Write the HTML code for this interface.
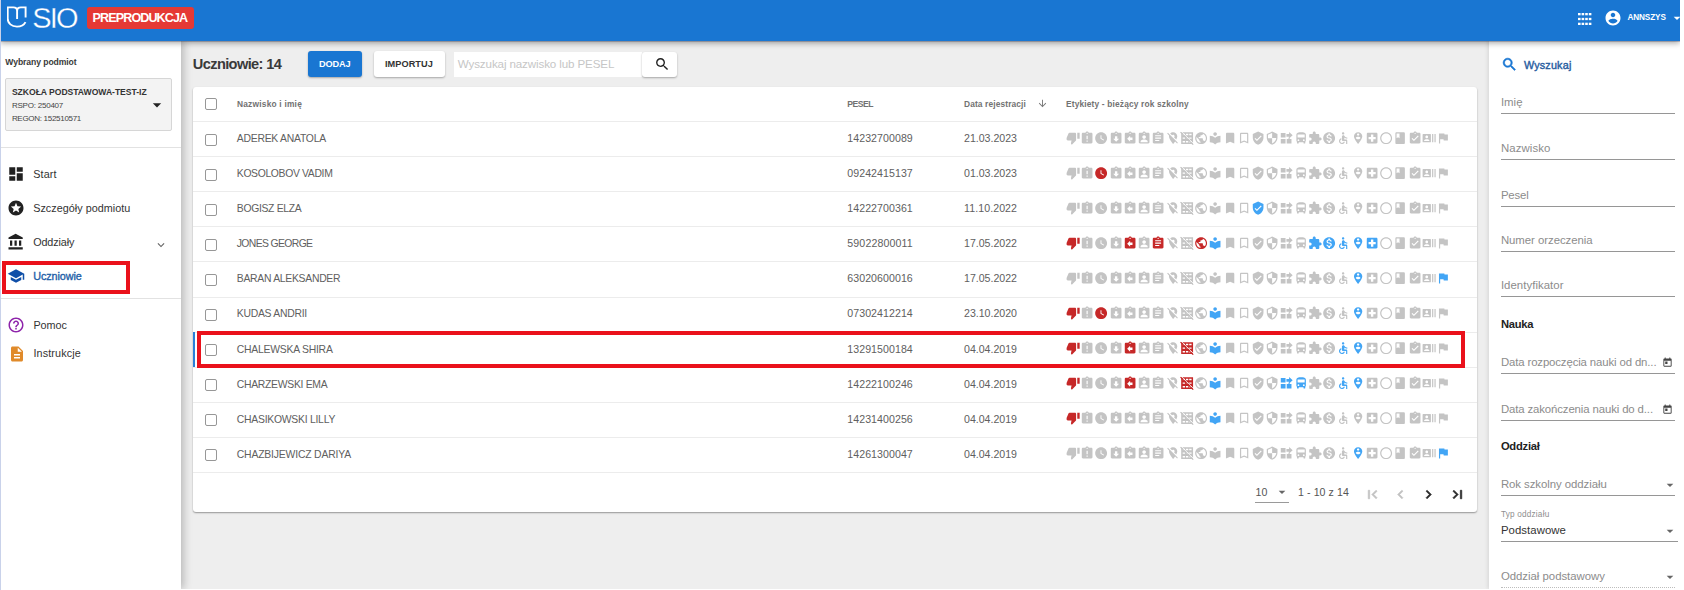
<!DOCTYPE html>
<html lang="pl"><head><meta charset="utf-8"><title>SIO - Uczniowie</title>
<style>
html,body{margin:0;padding:0;background:#fff;}
body{width:1684px;height:590px;position:relative;overflow:hidden;font-family:"Liberation Sans",sans-serif;}
.b{position:absolute;display:block;}
.t{position:absolute;display:block;white-space:nowrap;}
</style></head><body>
<div class="b" style="left:181.00px;top:40.00px;width:1308.00px;height:549.00px;background:#eeeeee;"></div>
<div class="b" style="left:193.00px;top:86.50px;width:1284.00px;height:425.00px;background:#fff;border-radius:3px;box-shadow:0 1px 2px rgba(0,0,0,.28),0 1px 1px rgba(0,0,0,.12);"></div>
<div class="b" style="left:0.00px;top:40.00px;width:181.00px;height:549.00px;background:#fff;box-shadow:3px 0 8px rgba(0,0,0,.22);"></div>
<div class="b" style="left:1489.00px;top:40.00px;width:191.00px;height:549.00px;background:#fff;box-shadow:-1px 0 4px rgba(0,0,0,.11);"></div>
<div class="b" style="left:0.00px;top:0.00px;width:1680.00px;height:40.50px;background:#1976d2;box-shadow:0 1px 0 rgba(0,0,40,.2),0 2px 6px rgba(0,0,0,.36);"></div>
<div class="b" style="left:1680.00px;top:0.00px;width:4.00px;height:590.00px;background:#fff;"></div>
<div class="b" style="left:0.00px;top:589.00px;width:1684.00px;height:1.00px;background:#fff;"></div>
<div class="b" style="left:0.00px;top:0.00px;width:1.00px;height:590.00px;background:#c9d2ea;"></div>
<svg class="b" style="left:7px;top:6px" width="20" height="22" viewBox="0 0 20 22"><path fill="none" stroke="#fff" stroke-width="1.9" stroke-linejoin="round" stroke-linecap="butt" d="M0.700 1.400H6.400C8.600 1.400 10.100 2.600 10.100 4.900V12.900M18.600 1.400H13.800C11.600 1.400 10.100 2.600 10.100 4.900M18.600 0.450V11.600M0.700 0.450V12.400C0.700 17.400 4.600 20.600 10 20.600 13.700 20.600 17 19 18.500 16.100"/></svg>
<span class="t" style="left:32.30px;top:2px;line-height:32px;font-size:29px;color:#fff;letter-spacing:-1.879px;-webkit-text-stroke:0.35px #1976d2;">SIO</span>
<div class="b" style="left:86.50px;top:6.50px;width:107.30px;height:22.00px;background:#e53935;border-radius:3px;"></div>
<span class="t" style="left:92.60px;top:11px;line-height:14px;font-size:12.6px;font-weight:bold;color:#fff;letter-spacing:-0.920px;">PREPRODUKCJA</span>
<svg class="b" style="left:1578.3px;top:12.7px" width="13.4" height="12" viewBox="0 0 13.4 12"><rect x="0.0" y="0.00" width="2.6" height="2.3" fill="#fff"/><rect x="3.6" y="0.00" width="2.6" height="2.3" fill="#fff"/><rect x="7.2" y="0.00" width="2.6" height="2.3" fill="#fff"/><rect x="10.8" y="0.00" width="2.6" height="2.3" fill="#fff"/><rect x="0.0" y="4.85" width="2.6" height="2.3" fill="#fff"/><rect x="3.6" y="4.85" width="2.6" height="2.3" fill="#fff"/><rect x="7.2" y="4.85" width="2.6" height="2.3" fill="#fff"/><rect x="10.8" y="4.85" width="2.6" height="2.3" fill="#fff"/><rect x="0.0" y="9.70" width="2.6" height="2.3" fill="#fff"/><rect x="3.6" y="9.70" width="2.6" height="2.3" fill="#fff"/><rect x="7.2" y="9.70" width="2.6" height="2.3" fill="#fff"/><rect x="10.8" y="9.70" width="2.6" height="2.3" fill="#fff"/></svg>
<svg class="b" style="left:1604.30px;top:8.70px;" width="18" height="18" viewBox="0 0 24 24"><path fill="#fff" d="M12 2C6.480 2 2 6.480 2 12s4.480 10 10 10 10-4.480 10-10S17.520 2 12 2zm0 3c1.660 0 3 1.340 3 3s-1.340 3-3 3-3-1.340-3-3 1.340-3 3-3zm0 14.200c-2.500 0-4.710-1.280-6-3.220.03-1.990 4-3.080 6-3.080 1.990 0 5.970 1.090 6 3.080-1.290 1.940-3.500 3.220-6 3.220z"/></svg>
<span class="t" style="left:1627.50px;top:13px;line-height:9px;font-size:8.2px;font-weight:bold;color:#fff;letter-spacing:-0.131px;">ANNSZYS</span>
<svg class="b" style="left:1668.50px;top:9.50px;" width="16" height="16" viewBox="0 0 24 24"><path fill="#fff" d="M7 10l5 5 5-5z"/></svg>
<span class="t" style="left:5.30px;top:57px;line-height:10px;font-size:8.6px;font-weight:bold;color:#3a3a3a;letter-spacing:-0.076px;">Wybrany podmiot</span>
<div class="b" style="left:5.30px;top:78.20px;width:166.30px;height:53.00px;background:#f3f3f3;border:1px solid #d6d6d6;box-sizing:border-box;border-radius:2px;"></div>
<span class="t" style="left:11.90px;top:87px;line-height:10px;font-size:8.6px;font-weight:bold;color:#333;letter-spacing:-0.033px;">SZKOŁA PODSTAWOWA-TEST-IZ</span>
<span class="t" style="left:11.90px;top:101px;line-height:9px;font-size:8.0px;color:#444;letter-spacing:-0.219px;">RSPO: 250407</span>
<span class="t" style="left:11.90px;top:114px;line-height:9px;font-size:8.0px;color:#444;letter-spacing:-0.295px;">REGON: 152510571</span>
<svg class="b" style="left:147.00px;top:95.30px;" width="20" height="20" viewBox="0 0 24 24"><path fill="#222" d="M7 10l5 5 5-5z"/></svg>
<div class="b" style="left:1.00px;top:147.00px;width:180.00px;height:1.00px;background:#e2e2e2;"></div>
<div class="b" style="left:1.00px;top:298.00px;width:180.00px;height:1.00px;background:#e2e2e2;"></div>
<svg class="b" style="left:7.30px;top:165.20px;" width="18" height="18" viewBox="0 0 24 24"><path fill="#212121" d="M3 13h8V3H3v10zm0 8h8v-6H3v6zm10 0h8V11h-8v10zm0-18v6h8V3h-8z"/></svg>
<span class="t" style="left:33.20px;top:168px;line-height:12px;font-size:10.8px;color:#333;letter-spacing:0.123px;">Start</span>
<svg class="b" style="left:7.30px;top:199.20px;" width="18" height="18" viewBox="0 0 24 24"><path fill="#212121" d="M11.990 2C6.470 2 2 6.480 2 12s4.470 10 9.990 10C17.520 22 22 17.520 22 12S17.520 2 11.990 2zm4.240 16L12 15.450 7.770 18l1.120-4.810-3.730-3.230 4.920-.420L12 5l1.920 4.530 4.920.420-3.730 3.230L16.230 18z"/></svg>
<span class="t" style="left:33.20px;top:202px;line-height:12px;font-size:10.8px;color:#333;letter-spacing:0.026px;">Szczegóły podmiotu</span>
<svg class="b" style="left:7.30px;top:233.20px;" width="18" height="18" viewBox="0 0 24 24"><path fill="#212121" d="M4 10v7h3v-7H4zm6 0v7h3v-7h-3zM2 22h19v-3H2v3zm14-12v7h3v-7h-3zm-4.500-9L2 6v2h19V6l-9.500-5z"/></svg>
<span class="t" style="left:33.20px;top:236px;line-height:12px;font-size:10.8px;color:#333;letter-spacing:-0.117px;">Oddziały</span>
<svg class="b" style="left:7.30px;top:267.40px;" width="18" height="18" viewBox="0 0 24 24"><path fill="#0f4fa8" d="M5 13.180v4L12 21l7-3.820v-4L12 17l-7-3.820zM12 3L1 9l11 6 9-4.910V17h2V9L12 3z"/></svg>
<span class="t" style="left:33.20px;top:270px;line-height:12px;font-size:10.8px;color:#1f5fa8;letter-spacing:-0.065px;-webkit-text-stroke:0.35px #1f5fa8;">Uczniowie</span>
<svg class="b" style="left:154.00px;top:237.50px;" width="14" height="14" viewBox="0 0 24 24"><path fill="#666" d="M16.590 8.590L12 13.170 7.410 8.590 6 10l6 6 6-6z"/></svg>
<svg class="b" style="left:7.20px;top:316.30px;" width="18" height="18" viewBox="0 0 24 24"><path fill="#8e24aa" d="M11 18h2v-2h-2v2zm1-16C6.480 2 2 6.480 2 12s4.480 10 10 10 10-4.480 10-10S17.520 2 12 2zm0 18c-4.410 0-8-3.590-8-8s3.590-8 8-8 8 3.590 8 8-3.590 8-8 8zm0-14c-2.210 0-4 1.790-4 4h2c0-1.100.9-2 2-2s2 .9 2 2c0 2-3 1.750-3 5h2c0-2.250 3-2.500 3-5 0-2.210-1.790-4-4-4z"/></svg>
<span class="t" style="left:33.40px;top:319px;line-height:12px;font-size:10.8px;color:#333;letter-spacing:-0.029px;">Pomoc</span>
<svg class="b" style="left:7.50px;top:344.90px;" width="18" height="18" viewBox="0 0 24 24"><path fill="#e08a2a" d="M14 2H6c-1.100 0-1.990.9-1.990 2L4 20c0 1.100.890 2 1.990 2H18c1.100 0 2-.9 2-2V8l-6-6zm2 16H8v-2h8v2zm0-4H8v-2h8v2zm-3-5V3.500L18.500 9H13z"/></svg>
<span class="t" style="left:33.40px;top:347px;line-height:12px;font-size:10.8px;color:#333;letter-spacing:0.131px;">Instrukcje</span>
<div class="b" style="left:2.30px;top:260.70px;width:127.80px;height:33.40px;border:4px solid #ea111b;box-sizing:border-box;"></div>
<span class="t" style="left:192.80px;top:56px;line-height:16px;font-size:14.6px;font-weight:bold;color:#3a3a3a;letter-spacing:-0.621px;">Uczniowie: 14</span>
<div class="b" style="left:308.00px;top:51.00px;width:54.00px;height:26.00px;background:#1976d2;border-radius:3px;box-shadow:0 1px 2px rgba(0,0,0,.3);"></div>
<span class="t" style="left:319.00px;top:59px;line-height:10px;font-size:9.2px;font-weight:bold;color:#fff;letter-spacing:-0.126px;">DODAJ</span>
<div class="b" style="left:373.70px;top:51.00px;width:71.00px;height:26.00px;background:#fff;border-radius:3px;box-shadow:0 1px 2px rgba(0,0,0,.3);"></div>
<span class="t" style="left:384.90px;top:59px;line-height:10px;font-size:9.2px;font-weight:bold;color:#333;letter-spacing:0.066px;">IMPORTUJ</span>
<div class="b" style="left:454.20px;top:51.60px;width:188.00px;height:25.40px;background:#fff;"></div>
<span class="t" style="left:457.80px;top:57px;line-height:13px;font-size:11.6px;color:#c6c6c6;letter-spacing:-0.119px;">Wyszukaj nazwisko lub PESEL</span>
<div class="b" style="left:642.30px;top:51.60px;width:34.70px;height:25.40px;background:#fff;border-radius:3px;box-shadow:0 1px 2px rgba(0,0,0,.3);"></div>
<svg class="b" style="left:653.80px;top:56.00px;" width="16.5" height="16.5" viewBox="0 0 24 24"><path fill="#222" d="M15.500 14h-.79l-.28-.27C15.410 12.590 16 11.110 16 9.500 16 5.910 13.090 3 9.500 3S3 5.910 3 9.500 5.910 16 9.500 16c1.610 0 3.090-.59 4.230-1.570l.27.28v.79l5 4.990L20.490 19l-4.990-5zm-6 0C7.010 14 5 11.990 5 9.500S7.010 5 9.500 5 14 7.010 14 9.500 11.990 14 9.500 14z"/></svg>
<div class="b" style="left:205.20px;top:98.20px;width:12.00px;height:12.00px;border:1px solid #979797;border-radius:2px;box-sizing:border-box;background:#fff;"></div>
<span class="t" style="left:237.00px;top:99px;line-height:10px;font-size:8.4px;font-weight:bold;color:#727272;letter-spacing:0.208px;">Nazwisko i imię</span>
<span class="t" style="left:847.30px;top:99px;line-height:10px;font-size:8.6px;font-weight:bold;color:#727272;letter-spacing:-0.475px;">PESEL</span>
<span class="t" style="left:964.00px;top:99px;line-height:10px;font-size:8.4px;font-weight:bold;color:#727272;letter-spacing:0.118px;">Data rejestracji</span>
<svg class="b" style="left:1037.40px;top:97.80px;" width="11" height="11" viewBox="0 0 24 24"><path fill="#777" d="M20 12l-1.410-1.410L13 16.170V4h-2v12.170l-5.580-5.590L4 12l8 8 8-8z"/></svg>
<span class="t" style="left:1066.00px;top:99px;line-height:10px;font-size:8.4px;font-weight:bold;color:#727272;letter-spacing:0.152px;">Etykiety - bieżący rok szkolny</span>
<div class="b" style="left:193.00px;top:121.00px;width:1284.00px;height:1.00px;background:#ececec;"></div>
<div class="b" style="left:205.20px;top:133.70px;width:12.00px;height:12.00px;border:1px solid #979797;border-radius:2px;box-sizing:border-box;background:#fff;"></div>
<span class="t" style="left:236.80px;top:133px;line-height:11px;font-size:10.4px;color:#606060;letter-spacing:-0.252px;">ADEREK ANATOLA</span>
<span class="t" style="left:847.30px;top:132px;line-height:12px;font-size:10.6px;color:#606060;letter-spacing:0.065px;">14232700089</span>
<span class="t" style="left:964.00px;top:132px;line-height:12px;font-size:10.6px;color:#606060;letter-spacing:-0.006px;">21.03.2023</span>
<svg class="b" style="left:1066.00px;top:131.10px;color:#c4c4c4" width="14.25" height="14.25" viewBox="0 0 24 24"><path fill="currentColor" d="M15 3H6c-.83 0-1.54.5-1.84 1.22l-3.02 7.05c-.09.23-.14.47-.14.73v2c0 1.1.9 2 2 2h6.31l-.95 4.57-.03.32c0 .41.17.79.44 1.06L9.83 23l6.59-6.59c.36-.36.58-.86.58-1.41V5c0-1.1-.9-2-2-2zm4 0v10h4V3h-4z"/></svg>
<svg class="b" style="left:1080.23px;top:131.10px;color:#c4c4c4" width="14.25" height="14.25" viewBox="0 0 24 24"><path fill="currentColor" d="M19 3h-4.18C14.4 1.84 13.3 1 12 1c-1.3 0-2.4.84-2.82 2H5c-1.1 0-2 .9-2 2v14c0 1.1.9 2 2 2h14c1.1 0 2-.9 2-2V5c0-1.1-.9-2-2-2zm-6 15h-2v-2h2v2zm0-4h-2V8h2v6zm-1-9c-.55 0-1-.45-1-1s.45-1 1-1 1 .45 1 1-.45 1-1 1z"/></svg>
<svg class="b" style="left:1094.46px;top:131.10px;color:#c4c4c4" width="14.25" height="14.25" viewBox="0 0 24 24"><path fill="currentColor" d="M12 2C6.5 2 2 6.5 2 12s4.5 10 10 10 10-4.5 10-10S17.5 2 12 2zm4.2 14.2L11 13V7h1.5v5.2l4.5 2.7-.8 1.3z"/></svg>
<svg class="b" style="left:1108.69px;top:131.10px;color:#c4c4c4" width="14.25" height="14.25" viewBox="0 0 24 24"><path fill="currentColor" d="M19 3h-4.18C14.4 1.84 13.3 1 12 1c-1.3 0-2.4.84-2.82 2H5c-1.1 0-2 .9-2 2v14c0 1.1.9 2 2 2h14c1.1 0 2-.9 2-2V5c0-1.1-.9-2-2-2zm-7 0c.55 0 1 .45 1 1s-.45 1-1 1-1-.45-1-1 .45-1 1-1zm0 15l-5-5h3V9h4v4h3l-5 5z"/></svg>
<svg class="b" style="left:1122.92px;top:131.10px;color:#c4c4c4" width="14.25" height="14.25" viewBox="0 0 24 24"><path fill="currentColor" d="M19 3h-4.18C14.4 1.84 13.3 1 12 1c-1.3 0-2.4.84-2.82 2H5c-1.1 0-2 .9-2 2v14c0 1.1.9 2 2 2h14c1.1 0 2-.9 2-2V5c0-1.1-.9-2-2-2zm-7 0c.55 0 1 .45 1 1s-.45 1-1 1-1-.45-1-1 .45-1 1-1zm4 12h-4v3l-5-5 5-5v3h4v4z"/></svg>
<svg class="b" style="left:1137.15px;top:131.10px;color:#c4c4c4" width="14.25" height="14.25" viewBox="0 0 24 24"><path fill="currentColor" d="M19 3h-4.18C14.4 1.84 13.3 1 12 1c-1.3 0-2.4.84-2.82 2H5c-1.1 0-2 .9-2 2v14c0 1.1.9 2 2 2h14c1.1 0 2-.9 2-2V5c0-1.1-.9-2-2-2zm-7 0c.55 0 1 .45 1 1s-.45 1-1 1-1-.45-1-1 .45-1 1-1zm0 4c1.66 0 3 1.34 3 3s-1.34 3-3 3-3-1.34-3-3 1.34-3 3-3zm6 12H6v-1.4c0-2 4-3.1 6-3.1s6 1.1 6 3.1V19z"/></svg>
<svg class="b" style="left:1151.38px;top:131.10px;color:#c4c4c4" width="14.25" height="14.25" viewBox="0 0 24 24"><path fill="currentColor" d="M19 3h-4.18C14.4 1.84 13.3 1 12 1c-1.3 0-2.4.84-2.82 2H5c-1.1 0-2 .9-2 2v14c0 1.1.9 2 2 2h14c1.1 0 2-.9 2-2V5c0-1.1-.9-2-2-2zm-7 0c.55 0 1 .45 1 1s-.45 1-1 1-1-.45-1-1 .45-1 1-1zm2 14H7v-2h7v2zm3-4H7v-2h10v2zm0-4H7V7h10v2z"/></svg>
<svg class="b" style="left:1165.61px;top:131.10px;color:#c4c4c4" width="14.25" height="14.25" viewBox="0 0 24 24"><path fill="currentColor" d="M12 6.5c1.38 0 2.5 1.12 2.5 2.5 0 .74-.33 1.39-.83 1.85l3.63 3.63c.98-1.86 1.7-3.8 1.7-5.48 0-3.87-3.13-7-7-7-1.98 0-3.76.83-5.04 2.15l3.19 3.19c.46-.52 1.11-.84 1.85-.84zm4.37 9.6l-4.63-4.63-.11-.11L3.27 3 2 4.27l3.18 3.18C5.07 7.95 5 8.47 5 9c0 5.250 7 13 7 13s1.670-1.850 3.380-4.350L18.730 21 20 19.730l-3.630-3.630z"/></svg>
<svg class="b" style="left:1179.84px;top:131.10px;color:#c4c4c4" width="14.25" height="14.25" viewBox="0 0 24 24"><path fill="currentColor" fill-rule="evenodd" d="M2 2h20v20H2zM4.5 4.8h4v2.400h-4zM10 4.8h4v2.400h-4zM15.5 4.8h4v2.400h-4zM4.5 10.8h4v2.400h-4zM10 10.8h4v2.400h-4zM15.5 10.8h4v2.400h-4zM4.5 16.8h4v2.400h-4zM10 16.8h4v2.400h-4zM15.5 16.8h4v2.400h-4z"/><path d="M2.300 0.700L23.300 21.700" stroke="#fff" stroke-width="1.300" fill="none"/><path d="M0.800 1.700L22.300 23.200" stroke="currentColor" stroke-width="1.800" fill="none"/></svg>
<svg class="b" style="left:1194.07px;top:131.10px;color:#c4c4c4" width="14.25" height="14.25" viewBox="0 0 24 24"><path fill="currentColor" d="M12 2C6.48 2 2 6.48 2 12s4.480 10 10 10 10-4.480 10-10S17.520 2 12 2zm-1 17.930c-3.950-.490-7-3.850-7-7.930 0-.620.080-1.210.210-1.790L9 15v1c0 1.100.9 2 2 2v1.930zm6.900-2.540c-.260-.810-1-1.390-1.900-1.390h-1v-3c0-.550-.450-1-1-1H8v-2h2c.550 0 1-.450 1-1V7h2c1.100 0 2-.9 2-2v-.410c2.930 1.190 5 4.060 5 7.410 0 2.080-.8 3.970-2.100 5.390z"/></svg>
<svg class="b" style="left:1208.30px;top:131.10px;color:#c4c4c4" width="14.25" height="14.25" viewBox="0 0 24 24"><path fill="currentColor" d="M12 11.550C9.640 9.350 6.480 8 3 8v11c3.480 0 6.640 1.350 9 3.550 2.360-2.190 5.520-3.550 9-3.550V8c-3.480 0-6.640 1.350-9 3.550zM12 8c1.660 0 3-1.340 3-3s-1.340-3-3-3-3 1.340-3 3 1.340 3 3 3z"/></svg>
<svg class="b" style="left:1222.53px;top:131.10px;color:#c4c4c4" width="14.25" height="14.25" viewBox="0 0 24 24"><path fill="currentColor" d="M17 3H7c-1.100 0-1.990.9-1.990 2L5 21l7-3 7 3V5c0-1.100-.9-2-2-2z"/></svg>
<svg class="b" style="left:1236.76px;top:131.10px;color:#c4c4c4" width="14.25" height="14.25" viewBox="0 0 24 24"><path fill="currentColor" d="M17 3H7c-1.100 0-1.990.9-1.990 2L5 21l7-3 7 3V5c0-1.100-.9-2-2-2zm0 15l-5-2.180L7 18V5h10v13z"/></svg>
<svg class="b" style="left:1250.99px;top:131.10px;color:#c4c4c4" width="14.25" height="14.25" viewBox="0 0 24 24"><path fill="currentColor" d="M12 1L3 5v6c0 5.550 3.840 10.740 9 12 5.160-1.260 9-6.450 9-12V5l-9-4zm-2 16l-4-4 1.410-1.410L10 14.170l6.590-6.590L18 9l-8 8z"/></svg>
<svg class="b" style="left:1265.22px;top:131.10px;color:#c4c4c4" width="14.25" height="14.25" viewBox="0 0 24 24"><path fill="currentColor" d="M12 1L3 5v6c0 5.550 3.840 10.740 9 12 5.160-1.260 9-6.450 9-12V5l-9-4zm0 10.990h7c-.530 4.120-3.280 7.790-7 8.940V12H5V6.300l7-3.110v8.800z"/></svg>
<svg class="b" style="left:1279.45px;top:131.10px;color:#c4c4c4" width="14.25" height="14.25" viewBox="0 0 24 24"><path fill="currentColor" d="M3 3.500h8V11H3zM3 13.500h8V21H3zM13 13.500h8V21h-8zM12.500 5H17V1.800l6 5.450-6 5.450V9.500h-4.500zM16 11h2v3h-2z"/></svg>
<svg class="b" style="left:1293.68px;top:131.10px;color:#c4c4c4" width="14.25" height="14.25" viewBox="0 0 24 24"><path fill="currentColor" d="M4 16c0 .880.390 1.670 1 2.220V20c0 .550.450 1 1 1h1c.550 0 1-.450 1-1v-1h8v1c0 .550.450 1 1 1h1c.550 0 1-.450 1-1v-1.780c.610-.550 1-1.340 1-2.220V6c0-3.500-3.580-4-8-4s-8 .5-8 4v10zm3.500 1c-.830 0-1.500-.670-1.500-1.500S6.670 14 7.500 14s1.500.670 1.500 1.500S8.330 17 7.500 17zm9 0c-.830 0-1.500-.670-1.500-1.500s.670-1.500 1.500-1.500 1.500.670 1.500 1.500-.670 1.500-1.500 1.500zm1.500-6H6V6h12v5z"/></svg>
<svg class="b" style="left:1307.91px;top:131.10px;color:#c4c4c4" width="14.25" height="14.25" viewBox="0 0 24 24"><path fill="currentColor" d="M20.500 11H19V7c0-1.100-.9-2-2-2h-4V3.500C13 2.120 11.880 1 10.500 1S8 2.120 8 3.500V5H4c-1.100 0-1.990.9-1.990 2v3.800H3.500c1.490 0 2.700 1.210 2.700 2.700s-1.210 2.700-2.700 2.700H2V20c0 1.100.9 2 2 2h3.800v-1.500c0-1.490 1.210-2.700 2.700-2.700 1.490 0 2.700 1.210 2.700 2.700V22H17c1.100 0 2-.9 2-2v-4h1.500c1.380 0 2.500-1.120 2.500-2.500S21.880 11 20.500 11z"/></svg>
<svg class="b" style="left:1322.14px;top:131.10px;color:#c4c4c4" width="14.25" height="14.25" viewBox="0 0 24 24"><path fill="currentColor" d="M12 2C6.480 2 2 6.480 2 12s4.480 10 10 10 10-4.480 10-10S17.520 2 12 2zm1.410 16.090V20h-2.670v-1.930c-1.710-.360-3.160-1.460-3.270-3.400h1.960c.100 1.050.820 1.870 2.650 1.870 1.960 0 2.400-.980 2.400-1.590 0-.830-.440-1.610-2.670-2.140-2.480-.6-4.180-1.620-4.180-3.670 0-1.720 1.390-2.840 3.110-3.210V4h2.670v1.950c1.860.450 2.790 1.860 2.850 3.390H14.300c-.050-1.110-.640-1.870-2.220-1.870-1.500 0-2.400.680-2.400 1.640 0 .840.650 1.390 2.670 1.910s4.180 1.390 4.180 3.910c-.010 1.830-1.380 2.830-3.120 3.160z"/></svg>
<svg class="b" style="left:1336.37px;top:131.10px;color:#c4c4c4" width="14.25" height="14.25" viewBox="0 0 24 24"><path fill="currentColor" d="M12 2c1.100 0 2 .9 2 2s-.9 2-2 2-2-.9-2-2 .9-2 2-2zM19 13v-2c-1.540.02-3.090-.75-4.070-1.830l-1.290-1.430c-.17-.19-.38-.34-.61-.45-.01 0-.01-.01-.02-.01H13c-.35-.2-.75-.3-1.190-.26C10.760 7.110 10 8.040 10 9.090V15c0 1.100.9 2 2 2h5v5h2v-5.500c0-1.100-.9-2-2-2h-3v-3.450c1.290 1.070 3.250 1.940 5 1.950zm-6.170 5c-.41 1.160-1.520 2-2.830 2-1.660 0-3-1.340-3-3 0-1.310.84-2.410 2-2.830V12.100c-2.280.46-4 2.480-4 4.900 0 2.760 2.240 5 5 5 2.420 0 4.440-1.720 4.900-4h-2.070z"/></svg>
<svg class="b" style="left:1350.60px;top:131.10px;color:#c4c4c4" width="14.25" height="14.25" viewBox="0 0 24 24"><path fill="currentColor" d="M12 2C8.140 2 5 5.140 5 9c0 5.250 7 13 7 13s7-7.750 7-13c0-3.860-3.140-7-7-7zm0 2c1.100 0 2 .9 2 2 0 1.110-.9 2-2 2s-2-.89-2-2c0-1.100.9-2 2-2zm0 10c-1.670 0-3.140-.85-4-2.150.02-1.320 2.670-2.050 4-2.050s3.980.73 4 2.050c-.86 1.300-2.330 2.150-4 2.150z"/></svg>
<svg class="b" style="left:1364.83px;top:131.10px;color:#c4c4c4" width="14.25" height="14.25" viewBox="0 0 24 24"><path fill="currentColor" d="M19 3H5c-1.100 0-1.990.9-1.990 2L3 19c0 1.100.9 2 2 2h14c1.100 0 2-.9 2-2V5c0-1.100-.9-2-2-2zm-1 11h-4v4h-4v-4H6v-4h4V6h4v4h4v4z"/></svg>
<svg class="b" style="left:1379.06px;top:131.10px;color:#c4c4c4" width="14.25" height="14.25" viewBox="0 0 24 24"><path fill="currentColor" d="M12 2C6.480 2 2 6.480 2 12s4.480 10 10 10 10-4.480 10-10S17.520 2 12 2zm0 18c-4.420 0-8-3.580-8-8s3.580-8 8-8 8 3.580 8 8-3.580 8-8 8z"/></svg>
<svg class="b" style="left:1393.29px;top:131.10px;color:#c4c4c4" width="14.25" height="14.25" viewBox="0 0 24 24"><path fill="currentColor" d="M18 2H6c-1.100 0-2 .9-2 2v16c0 1.100.9 2 2 2h12c1.100 0 2-.9 2-2V4c0-1.100-.9-2-2-2zM6 4h5v8l-2.500-1.500L6 12V4z"/></svg>
<svg class="b" style="left:1407.52px;top:131.10px;color:#c4c4c4" width="14.25" height="14.25" viewBox="0 0 24 24"><path fill="currentColor" d="M19 3h-4.18C14.4 1.84 13.3 1 12 1c-1.3 0-2.4.84-2.82 2H5c-1.1 0-2 .9-2 2v14c0 1.1.9 2 2 2h14c1.1 0 2-.9 2-2V5c0-1.1-.9-2-2-2zm-7 0c.55 0 1 .45 1 1s-.45 1-1 1-1-.45-1-1 .45-1 1-1zm-2 14l-4-4 1.410-1.410L10 14.170l6.590-6.590L18 9l-8 8z"/></svg>
<svg class="b" style="left:1421.75px;top:131.10px;color:#c4c4c4" width="14.25" height="14.25" viewBox="0 0 24 24"><path fill="currentColor" d="M21 5v14h2V5h-2zm-4 14h2V5h-2v14zM14 5H2c-.55 0-1 .45-1 1v12c0 .55.45 1 1 1h12c.55 0 1-.45 1-1V6c0-.55-.45-1-1-1zM8 7.750c1.240 0 2.250 1.010 2.250 2.250S9.240 12.250 8 12.250 5.750 11.240 5.750 10 6.760 7.750 8 7.750zM12.500 17h-9v-.75c0-1.500 3-2.250 4.500-2.250s4.500.75 4.500 2.250V17z"/></svg>
<svg class="b" style="left:1435.98px;top:131.10px;color:#c4c4c4" width="14.25" height="14.25" viewBox="0 0 24 24"><path fill="currentColor" d="M14.400 6L14 4H5v17h2v-7h5.600l.4 2h7V6z"/></svg>
<div class="b" style="left:193.00px;top:156.00px;width:1284.00px;height:1.00px;background:#ececec;"></div>
<div class="b" style="left:205.20px;top:168.73px;width:12.00px;height:12.00px;border:1px solid #979797;border-radius:2px;box-sizing:border-box;background:#fff;"></div>
<span class="t" style="left:236.80px;top:168px;line-height:11px;font-size:10.4px;color:#606060;letter-spacing:-0.346px;">KOSOLOBOV VADIM</span>
<span class="t" style="left:847.30px;top:167px;line-height:12px;font-size:10.6px;color:#606060;letter-spacing:0.065px;">09242415137</span>
<span class="t" style="left:964.00px;top:167px;line-height:12px;font-size:10.6px;color:#606060;letter-spacing:-0.006px;">01.03.2023</span>
<svg class="b" style="left:1066.00px;top:166.10px;color:#c4c4c4" width="14.25" height="14.25" viewBox="0 0 24 24"><path fill="currentColor" d="M15 3H6c-.83 0-1.54.5-1.84 1.22l-3.02 7.05c-.09.23-.14.47-.14.73v2c0 1.1.9 2 2 2h6.31l-.95 4.57-.03.32c0 .41.17.79.44 1.06L9.83 23l6.59-6.59c.36-.36.58-.86.58-1.41V5c0-1.1-.9-2-2-2zm4 0v10h4V3h-4z"/></svg>
<svg class="b" style="left:1080.23px;top:166.10px;color:#c4c4c4" width="14.25" height="14.25" viewBox="0 0 24 24"><path fill="currentColor" d="M19 3h-4.18C14.4 1.84 13.3 1 12 1c-1.3 0-2.4.84-2.82 2H5c-1.1 0-2 .9-2 2v14c0 1.1.9 2 2 2h14c1.1 0 2-.9 2-2V5c0-1.1-.9-2-2-2zm-6 15h-2v-2h2v2zm0-4h-2V8h2v6zm-1-9c-.55 0-1-.45-1-1s.45-1 1-1 1 .45 1 1-.45 1-1 1z"/></svg>
<svg class="b" style="left:1094.46px;top:166.10px;color:#c62828" width="14.25" height="14.25" viewBox="0 0 24 24"><path fill="currentColor" d="M12 2C6.5 2 2 6.5 2 12s4.5 10 10 10 10-4.5 10-10S17.5 2 12 2zm4.2 14.2L11 13V7h1.5v5.2l4.5 2.7-.8 1.3z"/></svg>
<svg class="b" style="left:1108.69px;top:166.10px;color:#c4c4c4" width="14.25" height="14.25" viewBox="0 0 24 24"><path fill="currentColor" d="M19 3h-4.18C14.4 1.84 13.3 1 12 1c-1.3 0-2.4.84-2.82 2H5c-1.1 0-2 .9-2 2v14c0 1.1.9 2 2 2h14c1.1 0 2-.9 2-2V5c0-1.1-.9-2-2-2zm-7 0c.55 0 1 .45 1 1s-.45 1-1 1-1-.45-1-1 .45-1 1-1zm0 15l-5-5h3V9h4v4h3l-5 5z"/></svg>
<svg class="b" style="left:1122.92px;top:166.10px;color:#c4c4c4" width="14.25" height="14.25" viewBox="0 0 24 24"><path fill="currentColor" d="M19 3h-4.18C14.4 1.84 13.3 1 12 1c-1.3 0-2.4.84-2.82 2H5c-1.1 0-2 .9-2 2v14c0 1.1.9 2 2 2h14c1.1 0 2-.9 2-2V5c0-1.1-.9-2-2-2zm-7 0c.55 0 1 .45 1 1s-.45 1-1 1-1-.45-1-1 .45-1 1-1zm4 12h-4v3l-5-5 5-5v3h4v4z"/></svg>
<svg class="b" style="left:1137.15px;top:166.10px;color:#c4c4c4" width="14.25" height="14.25" viewBox="0 0 24 24"><path fill="currentColor" d="M19 3h-4.18C14.4 1.84 13.3 1 12 1c-1.3 0-2.4.84-2.82 2H5c-1.1 0-2 .9-2 2v14c0 1.1.9 2 2 2h14c1.1 0 2-.9 2-2V5c0-1.1-.9-2-2-2zm-7 0c.55 0 1 .45 1 1s-.45 1-1 1-1-.45-1-1 .45-1 1-1zm0 4c1.66 0 3 1.34 3 3s-1.34 3-3 3-3-1.34-3-3 1.34-3 3-3zm6 12H6v-1.4c0-2 4-3.1 6-3.1s6 1.1 6 3.1V19z"/></svg>
<svg class="b" style="left:1151.38px;top:166.10px;color:#c4c4c4" width="14.25" height="14.25" viewBox="0 0 24 24"><path fill="currentColor" d="M19 3h-4.18C14.4 1.84 13.3 1 12 1c-1.3 0-2.4.84-2.82 2H5c-1.1 0-2 .9-2 2v14c0 1.1.9 2 2 2h14c1.1 0 2-.9 2-2V5c0-1.1-.9-2-2-2zm-7 0c.55 0 1 .45 1 1s-.45 1-1 1-1-.45-1-1 .45-1 1-1zm2 14H7v-2h7v2zm3-4H7v-2h10v2zm0-4H7V7h10v2z"/></svg>
<svg class="b" style="left:1165.61px;top:166.10px;color:#c4c4c4" width="14.25" height="14.25" viewBox="0 0 24 24"><path fill="currentColor" d="M12 6.5c1.38 0 2.5 1.12 2.5 2.5 0 .74-.33 1.39-.83 1.85l3.63 3.63c.98-1.86 1.7-3.8 1.7-5.48 0-3.87-3.13-7-7-7-1.98 0-3.76.83-5.04 2.15l3.19 3.19c.46-.52 1.11-.84 1.85-.84zm4.37 9.6l-4.63-4.63-.11-.11L3.27 3 2 4.27l3.18 3.18C5.07 7.95 5 8.47 5 9c0 5.250 7 13 7 13s1.670-1.850 3.380-4.350L18.730 21 20 19.730l-3.630-3.630z"/></svg>
<svg class="b" style="left:1179.84px;top:166.10px;color:#c4c4c4" width="14.25" height="14.25" viewBox="0 0 24 24"><path fill="currentColor" fill-rule="evenodd" d="M2 2h20v20H2zM4.5 4.8h4v2.400h-4zM10 4.8h4v2.400h-4zM15.5 4.8h4v2.400h-4zM4.5 10.8h4v2.400h-4zM10 10.8h4v2.400h-4zM15.5 10.8h4v2.400h-4zM4.5 16.8h4v2.400h-4zM10 16.8h4v2.400h-4zM15.5 16.8h4v2.400h-4z"/><path d="M2.300 0.700L23.300 21.700" stroke="#fff" stroke-width="1.300" fill="none"/><path d="M0.800 1.700L22.300 23.200" stroke="currentColor" stroke-width="1.800" fill="none"/></svg>
<svg class="b" style="left:1194.07px;top:166.10px;color:#c4c4c4" width="14.25" height="14.25" viewBox="0 0 24 24"><path fill="currentColor" d="M12 2C6.48 2 2 6.48 2 12s4.480 10 10 10 10-4.480 10-10S17.520 2 12 2zm-1 17.930c-3.950-.490-7-3.850-7-7.930 0-.620.080-1.210.210-1.790L9 15v1c0 1.100.9 2 2 2v1.930zm6.900-2.540c-.260-.810-1-1.390-1.900-1.390h-1v-3c0-.550-.450-1-1-1H8v-2h2c.550 0 1-.450 1-1V7h2c1.100 0 2-.9 2-2v-.410c2.930 1.190 5 4.060 5 7.410 0 2.080-.8 3.970-2.100 5.390z"/></svg>
<svg class="b" style="left:1208.30px;top:166.10px;color:#c4c4c4" width="14.25" height="14.25" viewBox="0 0 24 24"><path fill="currentColor" d="M12 11.550C9.640 9.350 6.480 8 3 8v11c3.480 0 6.640 1.350 9 3.550 2.360-2.190 5.520-3.550 9-3.550V8c-3.480 0-6.640 1.350-9 3.550zM12 8c1.660 0 3-1.340 3-3s-1.340-3-3-3-3 1.340-3 3 1.340 3 3 3z"/></svg>
<svg class="b" style="left:1222.53px;top:166.10px;color:#c4c4c4" width="14.25" height="14.25" viewBox="0 0 24 24"><path fill="currentColor" d="M17 3H7c-1.100 0-1.990.9-1.990 2L5 21l7-3 7 3V5c0-1.100-.9-2-2-2z"/></svg>
<svg class="b" style="left:1236.76px;top:166.10px;color:#c4c4c4" width="14.25" height="14.25" viewBox="0 0 24 24"><path fill="currentColor" d="M17 3H7c-1.100 0-1.990.9-1.990 2L5 21l7-3 7 3V5c0-1.100-.9-2-2-2zm0 15l-5-2.180L7 18V5h10v13z"/></svg>
<svg class="b" style="left:1250.99px;top:166.10px;color:#c4c4c4" width="14.25" height="14.25" viewBox="0 0 24 24"><path fill="currentColor" d="M12 1L3 5v6c0 5.550 3.840 10.740 9 12 5.160-1.260 9-6.450 9-12V5l-9-4zm-2 16l-4-4 1.410-1.410L10 14.170l6.590-6.590L18 9l-8 8z"/></svg>
<svg class="b" style="left:1265.22px;top:166.10px;color:#c4c4c4" width="14.25" height="14.25" viewBox="0 0 24 24"><path fill="currentColor" d="M12 1L3 5v6c0 5.550 3.840 10.740 9 12 5.160-1.260 9-6.450 9-12V5l-9-4zm0 10.990h7c-.530 4.120-3.280 7.790-7 8.940V12H5V6.300l7-3.110v8.800z"/></svg>
<svg class="b" style="left:1279.45px;top:166.10px;color:#c4c4c4" width="14.25" height="14.25" viewBox="0 0 24 24"><path fill="currentColor" d="M3 3.500h8V11H3zM3 13.500h8V21H3zM13 13.500h8V21h-8zM12.500 5H17V1.800l6 5.450-6 5.450V9.500h-4.500zM16 11h2v3h-2z"/></svg>
<svg class="b" style="left:1293.68px;top:166.10px;color:#c4c4c4" width="14.25" height="14.25" viewBox="0 0 24 24"><path fill="currentColor" d="M4 16c0 .880.390 1.670 1 2.220V20c0 .550.450 1 1 1h1c.550 0 1-.450 1-1v-1h8v1c0 .550.450 1 1 1h1c.550 0 1-.450 1-1v-1.780c.610-.550 1-1.340 1-2.220V6c0-3.500-3.580-4-8-4s-8 .5-8 4v10zm3.500 1c-.830 0-1.500-.670-1.500-1.500S6.670 14 7.500 14s1.500.670 1.500 1.500S8.330 17 7.500 17zm9 0c-.830 0-1.500-.670-1.500-1.500s.670-1.500 1.500-1.500 1.500.670 1.500 1.500-.670 1.500-1.500 1.500zm1.500-6H6V6h12v5z"/></svg>
<svg class="b" style="left:1307.91px;top:166.10px;color:#c4c4c4" width="14.25" height="14.25" viewBox="0 0 24 24"><path fill="currentColor" d="M20.500 11H19V7c0-1.100-.9-2-2-2h-4V3.500C13 2.120 11.880 1 10.500 1S8 2.120 8 3.500V5H4c-1.100 0-1.990.9-1.990 2v3.800H3.500c1.490 0 2.700 1.210 2.700 2.700s-1.210 2.700-2.700 2.700H2V20c0 1.100.9 2 2 2h3.800v-1.500c0-1.490 1.210-2.700 2.700-2.700 1.490 0 2.700 1.210 2.700 2.700V22H17c1.100 0 2-.9 2-2v-4h1.500c1.380 0 2.500-1.120 2.500-2.500S21.880 11 20.500 11z"/></svg>
<svg class="b" style="left:1322.14px;top:166.10px;color:#c4c4c4" width="14.25" height="14.25" viewBox="0 0 24 24"><path fill="currentColor" d="M12 2C6.480 2 2 6.480 2 12s4.480 10 10 10 10-4.480 10-10S17.520 2 12 2zm1.410 16.090V20h-2.670v-1.930c-1.710-.360-3.160-1.460-3.270-3.400h1.960c.100 1.050.820 1.870 2.650 1.870 1.960 0 2.400-.980 2.400-1.590 0-.830-.440-1.610-2.670-2.140-2.480-.6-4.180-1.620-4.180-3.670 0-1.720 1.390-2.840 3.110-3.210V4h2.670v1.950c1.860.450 2.790 1.860 2.850 3.390H14.300c-.050-1.110-.640-1.870-2.220-1.870-1.500 0-2.400.680-2.400 1.640 0 .840.650 1.390 2.670 1.910s4.180 1.390 4.180 3.910c-.010 1.830-1.380 2.830-3.120 3.160z"/></svg>
<svg class="b" style="left:1336.37px;top:166.10px;color:#c4c4c4" width="14.25" height="14.25" viewBox="0 0 24 24"><path fill="currentColor" d="M12 2c1.100 0 2 .9 2 2s-.9 2-2 2-2-.9-2-2 .9-2 2-2zM19 13v-2c-1.540.02-3.090-.75-4.070-1.830l-1.290-1.430c-.17-.19-.38-.34-.61-.45-.01 0-.01-.01-.02-.01H13c-.35-.2-.75-.3-1.190-.26C10.760 7.110 10 8.040 10 9.090V15c0 1.100.9 2 2 2h5v5h2v-5.500c0-1.100-.9-2-2-2h-3v-3.450c1.290 1.070 3.250 1.940 5 1.950zm-6.170 5c-.41 1.160-1.520 2-2.830 2-1.660 0-3-1.340-3-3 0-1.310.84-2.410 2-2.830V12.100c-2.280.46-4 2.480-4 4.900 0 2.760 2.240 5 5 5 2.420 0 4.440-1.720 4.900-4h-2.070z"/></svg>
<svg class="b" style="left:1350.60px;top:166.10px;color:#c4c4c4" width="14.25" height="14.25" viewBox="0 0 24 24"><path fill="currentColor" d="M12 2C8.140 2 5 5.140 5 9c0 5.250 7 13 7 13s7-7.750 7-13c0-3.860-3.140-7-7-7zm0 2c1.100 0 2 .9 2 2 0 1.110-.9 2-2 2s-2-.89-2-2c0-1.100.9-2 2-2zm0 10c-1.670 0-3.140-.85-4-2.150.02-1.320 2.670-2.050 4-2.050s3.980.73 4 2.050c-.86 1.300-2.330 2.150-4 2.150z"/></svg>
<svg class="b" style="left:1364.83px;top:166.10px;color:#c4c4c4" width="14.25" height="14.25" viewBox="0 0 24 24"><path fill="currentColor" d="M19 3H5c-1.100 0-1.990.9-1.990 2L3 19c0 1.100.9 2 2 2h14c1.100 0 2-.9 2-2V5c0-1.100-.9-2-2-2zm-1 11h-4v4h-4v-4H6v-4h4V6h4v4h4v4z"/></svg>
<svg class="b" style="left:1379.06px;top:166.10px;color:#c4c4c4" width="14.25" height="14.25" viewBox="0 0 24 24"><path fill="currentColor" d="M12 2C6.480 2 2 6.480 2 12s4.480 10 10 10 10-4.480 10-10S17.520 2 12 2zm0 18c-4.420 0-8-3.580-8-8s3.580-8 8-8 8 3.580 8 8-3.580 8-8 8z"/></svg>
<svg class="b" style="left:1393.29px;top:166.10px;color:#c4c4c4" width="14.25" height="14.25" viewBox="0 0 24 24"><path fill="currentColor" d="M18 2H6c-1.100 0-2 .9-2 2v16c0 1.100.9 2 2 2h12c1.100 0 2-.9 2-2V4c0-1.100-.9-2-2-2zM6 4h5v8l-2.500-1.500L6 12V4z"/></svg>
<svg class="b" style="left:1407.52px;top:166.10px;color:#c4c4c4" width="14.25" height="14.25" viewBox="0 0 24 24"><path fill="currentColor" d="M19 3h-4.18C14.4 1.84 13.3 1 12 1c-1.3 0-2.4.84-2.82 2H5c-1.1 0-2 .9-2 2v14c0 1.1.9 2 2 2h14c1.1 0 2-.9 2-2V5c0-1.1-.9-2-2-2zm-7 0c.55 0 1 .45 1 1s-.45 1-1 1-1-.45-1-1 .45-1 1-1zm-2 14l-4-4 1.410-1.410L10 14.170l6.590-6.590L18 9l-8 8z"/></svg>
<svg class="b" style="left:1421.75px;top:166.10px;color:#c4c4c4" width="14.25" height="14.25" viewBox="0 0 24 24"><path fill="currentColor" d="M21 5v14h2V5h-2zm-4 14h2V5h-2v14zM14 5H2c-.55 0-1 .45-1 1v12c0 .55.45 1 1 1h12c.55 0 1-.45 1-1V6c0-.55-.45-1-1-1zM8 7.750c1.240 0 2.250 1.010 2.250 2.250S9.240 12.250 8 12.250 5.750 11.240 5.750 10 6.760 7.750 8 7.750zM12.500 17h-9v-.75c0-1.500 3-2.250 4.500-2.250s4.500.75 4.500 2.250V17z"/></svg>
<svg class="b" style="left:1435.98px;top:166.10px;color:#c4c4c4" width="14.25" height="14.25" viewBox="0 0 24 24"><path fill="currentColor" d="M14.400 6L14 4H5v17h2v-7h5.600l.4 2h7V6z"/></svg>
<div class="b" style="left:193.00px;top:191.00px;width:1284.00px;height:1.00px;background:#ececec;"></div>
<div class="b" style="left:205.20px;top:203.76px;width:12.00px;height:12.00px;border:1px solid #979797;border-radius:2px;box-sizing:border-box;background:#fff;"></div>
<span class="t" style="left:236.80px;top:203px;line-height:11px;font-size:10.4px;color:#606060;letter-spacing:-0.320px;">BOGISZ ELZA</span>
<span class="t" style="left:847.30px;top:202px;line-height:12px;font-size:10.6px;color:#606060;letter-spacing:0.065px;">14222700361</span>
<span class="t" style="left:964.00px;top:202px;line-height:12px;font-size:10.6px;color:#606060;letter-spacing:0.082px;">11.10.2022</span>
<svg class="b" style="left:1066.00px;top:201.10px;color:#c4c4c4" width="14.25" height="14.25" viewBox="0 0 24 24"><path fill="currentColor" d="M15 3H6c-.83 0-1.54.5-1.84 1.22l-3.02 7.05c-.09.23-.14.47-.14.73v2c0 1.1.9 2 2 2h6.31l-.95 4.57-.03.32c0 .41.17.79.44 1.06L9.83 23l6.59-6.59c.36-.36.58-.86.58-1.41V5c0-1.1-.9-2-2-2zm4 0v10h4V3h-4z"/></svg>
<svg class="b" style="left:1080.23px;top:201.10px;color:#c4c4c4" width="14.25" height="14.25" viewBox="0 0 24 24"><path fill="currentColor" d="M19 3h-4.18C14.4 1.84 13.3 1 12 1c-1.3 0-2.4.84-2.82 2H5c-1.1 0-2 .9-2 2v14c0 1.1.9 2 2 2h14c1.1 0 2-.9 2-2V5c0-1.1-.9-2-2-2zm-6 15h-2v-2h2v2zm0-4h-2V8h2v6zm-1-9c-.55 0-1-.45-1-1s.45-1 1-1 1 .45 1 1-.45 1-1 1z"/></svg>
<svg class="b" style="left:1094.46px;top:201.10px;color:#c4c4c4" width="14.25" height="14.25" viewBox="0 0 24 24"><path fill="currentColor" d="M12 2C6.5 2 2 6.5 2 12s4.5 10 10 10 10-4.5 10-10S17.5 2 12 2zm4.2 14.2L11 13V7h1.5v5.2l4.5 2.7-.8 1.3z"/></svg>
<svg class="b" style="left:1108.69px;top:201.10px;color:#c4c4c4" width="14.25" height="14.25" viewBox="0 0 24 24"><path fill="currentColor" d="M19 3h-4.18C14.4 1.84 13.3 1 12 1c-1.3 0-2.4.84-2.82 2H5c-1.1 0-2 .9-2 2v14c0 1.1.9 2 2 2h14c1.1 0 2-.9 2-2V5c0-1.1-.9-2-2-2zm-7 0c.55 0 1 .45 1 1s-.45 1-1 1-1-.45-1-1 .45-1 1-1zm0 15l-5-5h3V9h4v4h3l-5 5z"/></svg>
<svg class="b" style="left:1122.92px;top:201.10px;color:#c4c4c4" width="14.25" height="14.25" viewBox="0 0 24 24"><path fill="currentColor" d="M19 3h-4.18C14.4 1.84 13.3 1 12 1c-1.3 0-2.4.84-2.82 2H5c-1.1 0-2 .9-2 2v14c0 1.1.9 2 2 2h14c1.1 0 2-.9 2-2V5c0-1.1-.9-2-2-2zm-7 0c.55 0 1 .45 1 1s-.45 1-1 1-1-.45-1-1 .45-1 1-1zm4 12h-4v3l-5-5 5-5v3h4v4z"/></svg>
<svg class="b" style="left:1137.15px;top:201.10px;color:#c4c4c4" width="14.25" height="14.25" viewBox="0 0 24 24"><path fill="currentColor" d="M19 3h-4.18C14.4 1.84 13.3 1 12 1c-1.3 0-2.4.84-2.82 2H5c-1.1 0-2 .9-2 2v14c0 1.1.9 2 2 2h14c1.1 0 2-.9 2-2V5c0-1.1-.9-2-2-2zm-7 0c.55 0 1 .45 1 1s-.45 1-1 1-1-.45-1-1 .45-1 1-1zm0 4c1.66 0 3 1.34 3 3s-1.34 3-3 3-3-1.34-3-3 1.34-3 3-3zm6 12H6v-1.4c0-2 4-3.1 6-3.1s6 1.1 6 3.1V19z"/></svg>
<svg class="b" style="left:1151.38px;top:201.10px;color:#c4c4c4" width="14.25" height="14.25" viewBox="0 0 24 24"><path fill="currentColor" d="M19 3h-4.18C14.4 1.84 13.3 1 12 1c-1.3 0-2.4.84-2.82 2H5c-1.1 0-2 .9-2 2v14c0 1.1.9 2 2 2h14c1.1 0 2-.9 2-2V5c0-1.1-.9-2-2-2zm-7 0c.55 0 1 .45 1 1s-.45 1-1 1-1-.45-1-1 .45-1 1-1zm2 14H7v-2h7v2zm3-4H7v-2h10v2zm0-4H7V7h10v2z"/></svg>
<svg class="b" style="left:1165.61px;top:201.10px;color:#c4c4c4" width="14.25" height="14.25" viewBox="0 0 24 24"><path fill="currentColor" d="M12 6.5c1.38 0 2.5 1.12 2.5 2.5 0 .74-.33 1.39-.83 1.85l3.63 3.63c.98-1.86 1.7-3.8 1.7-5.48 0-3.87-3.13-7-7-7-1.98 0-3.76.83-5.04 2.15l3.19 3.19c.46-.52 1.11-.84 1.85-.84zm4.37 9.6l-4.63-4.63-.11-.11L3.27 3 2 4.27l3.18 3.18C5.07 7.95 5 8.47 5 9c0 5.250 7 13 7 13s1.670-1.850 3.380-4.350L18.730 21 20 19.730l-3.630-3.630z"/></svg>
<svg class="b" style="left:1179.84px;top:201.10px;color:#c4c4c4" width="14.25" height="14.25" viewBox="0 0 24 24"><path fill="currentColor" fill-rule="evenodd" d="M2 2h20v20H2zM4.5 4.8h4v2.400h-4zM10 4.8h4v2.400h-4zM15.5 4.8h4v2.400h-4zM4.5 10.8h4v2.400h-4zM10 10.8h4v2.400h-4zM15.5 10.8h4v2.400h-4zM4.5 16.8h4v2.400h-4zM10 16.8h4v2.400h-4zM15.5 16.8h4v2.400h-4z"/><path d="M2.300 0.700L23.300 21.700" stroke="#fff" stroke-width="1.300" fill="none"/><path d="M0.800 1.700L22.300 23.200" stroke="currentColor" stroke-width="1.800" fill="none"/></svg>
<svg class="b" style="left:1194.07px;top:201.10px;color:#c4c4c4" width="14.25" height="14.25" viewBox="0 0 24 24"><path fill="currentColor" d="M12 2C6.48 2 2 6.48 2 12s4.480 10 10 10 10-4.480 10-10S17.520 2 12 2zm-1 17.930c-3.950-.490-7-3.850-7-7.930 0-.620.080-1.210.210-1.790L9 15v1c0 1.100.9 2 2 2v1.930zm6.900-2.540c-.260-.810-1-1.390-1.900-1.390h-1v-3c0-.550-.450-1-1-1H8v-2h2c.550 0 1-.450 1-1V7h2c1.100 0 2-.9 2-2v-.410c2.930 1.190 5 4.060 5 7.410 0 2.080-.8 3.970-2.100 5.390z"/></svg>
<svg class="b" style="left:1208.30px;top:201.10px;color:#c4c4c4" width="14.25" height="14.25" viewBox="0 0 24 24"><path fill="currentColor" d="M12 11.550C9.640 9.350 6.480 8 3 8v11c3.480 0 6.640 1.350 9 3.550 2.360-2.190 5.520-3.550 9-3.550V8c-3.480 0-6.640 1.350-9 3.550zM12 8c1.660 0 3-1.340 3-3s-1.340-3-3-3-3 1.340-3 3 1.340 3 3 3z"/></svg>
<svg class="b" style="left:1222.53px;top:201.10px;color:#c4c4c4" width="14.25" height="14.25" viewBox="0 0 24 24"><path fill="currentColor" d="M17 3H7c-1.100 0-1.990.9-1.990 2L5 21l7-3 7 3V5c0-1.100-.9-2-2-2z"/></svg>
<svg class="b" style="left:1236.76px;top:201.10px;color:#c4c4c4" width="14.25" height="14.25" viewBox="0 0 24 24"><path fill="currentColor" d="M17 3H7c-1.100 0-1.990.9-1.990 2L5 21l7-3 7 3V5c0-1.100-.9-2-2-2zm0 15l-5-2.180L7 18V5h10v13z"/></svg>
<svg class="b" style="left:1250.99px;top:201.10px;color:#42a5f5" width="14.25" height="14.25" viewBox="0 0 24 24"><path fill="currentColor" d="M12 1L3 5v6c0 5.550 3.840 10.740 9 12 5.160-1.260 9-6.450 9-12V5l-9-4zm-2 16l-4-4 1.410-1.410L10 14.170l6.590-6.590L18 9l-8 8z"/></svg>
<svg class="b" style="left:1265.22px;top:201.10px;color:#c4c4c4" width="14.25" height="14.25" viewBox="0 0 24 24"><path fill="currentColor" d="M12 1L3 5v6c0 5.550 3.840 10.740 9 12 5.160-1.260 9-6.450 9-12V5l-9-4zm0 10.990h7c-.530 4.120-3.280 7.790-7 8.940V12H5V6.300l7-3.110v8.800z"/></svg>
<svg class="b" style="left:1279.45px;top:201.10px;color:#c4c4c4" width="14.25" height="14.25" viewBox="0 0 24 24"><path fill="currentColor" d="M3 3.500h8V11H3zM3 13.500h8V21H3zM13 13.500h8V21h-8zM12.500 5H17V1.800l6 5.450-6 5.450V9.500h-4.500zM16 11h2v3h-2z"/></svg>
<svg class="b" style="left:1293.68px;top:201.10px;color:#c4c4c4" width="14.25" height="14.25" viewBox="0 0 24 24"><path fill="currentColor" d="M4 16c0 .880.390 1.670 1 2.220V20c0 .550.450 1 1 1h1c.550 0 1-.450 1-1v-1h8v1c0 .550.450 1 1 1h1c.550 0 1-.450 1-1v-1.780c.610-.550 1-1.340 1-2.220V6c0-3.500-3.580-4-8-4s-8 .5-8 4v10zm3.500 1c-.830 0-1.500-.670-1.500-1.500S6.670 14 7.500 14s1.500.670 1.500 1.500S8.330 17 7.500 17zm9 0c-.830 0-1.500-.670-1.500-1.500s.670-1.500 1.500-1.500 1.500.670 1.500 1.500-.670 1.500-1.500 1.500zm1.500-6H6V6h12v5z"/></svg>
<svg class="b" style="left:1307.91px;top:201.10px;color:#c4c4c4" width="14.25" height="14.25" viewBox="0 0 24 24"><path fill="currentColor" d="M20.500 11H19V7c0-1.100-.9-2-2-2h-4V3.500C13 2.120 11.880 1 10.500 1S8 2.120 8 3.500V5H4c-1.100 0-1.990.9-1.990 2v3.800H3.500c1.490 0 2.700 1.210 2.700 2.700s-1.210 2.700-2.700 2.700H2V20c0 1.100.9 2 2 2h3.800v-1.500c0-1.490 1.210-2.700 2.700-2.700 1.490 0 2.700 1.210 2.700 2.700V22H17c1.100 0 2-.9 2-2v-4h1.500c1.380 0 2.500-1.120 2.500-2.500S21.880 11 20.500 11z"/></svg>
<svg class="b" style="left:1322.14px;top:201.10px;color:#c4c4c4" width="14.25" height="14.25" viewBox="0 0 24 24"><path fill="currentColor" d="M12 2C6.480 2 2 6.480 2 12s4.480 10 10 10 10-4.480 10-10S17.520 2 12 2zm1.410 16.090V20h-2.670v-1.930c-1.710-.360-3.160-1.460-3.270-3.400h1.960c.100 1.050.820 1.870 2.650 1.870 1.960 0 2.400-.980 2.400-1.590 0-.830-.440-1.610-2.670-2.140-2.480-.6-4.180-1.620-4.180-3.670 0-1.720 1.390-2.840 3.110-3.210V4h2.670v1.950c1.860.450 2.790 1.860 2.850 3.390H14.300c-.050-1.110-.640-1.870-2.220-1.870-1.500 0-2.400.680-2.400 1.640 0 .840.650 1.390 2.670 1.910s4.180 1.390 4.180 3.910c-.010 1.830-1.380 2.830-3.120 3.160z"/></svg>
<svg class="b" style="left:1336.37px;top:201.10px;color:#c4c4c4" width="14.25" height="14.25" viewBox="0 0 24 24"><path fill="currentColor" d="M12 2c1.100 0 2 .9 2 2s-.9 2-2 2-2-.9-2-2 .9-2 2-2zM19 13v-2c-1.540.02-3.090-.75-4.070-1.830l-1.290-1.430c-.17-.19-.38-.34-.61-.45-.01 0-.01-.01-.02-.01H13c-.35-.2-.75-.3-1.190-.26C10.760 7.110 10 8.040 10 9.090V15c0 1.100.9 2 2 2h5v5h2v-5.500c0-1.100-.9-2-2-2h-3v-3.450c1.290 1.070 3.250 1.940 5 1.950zm-6.170 5c-.41 1.160-1.520 2-2.830 2-1.660 0-3-1.340-3-3 0-1.310.84-2.410 2-2.830V12.100c-2.280.46-4 2.480-4 4.900 0 2.760 2.240 5 5 5 2.420 0 4.440-1.720 4.900-4h-2.070z"/></svg>
<svg class="b" style="left:1350.60px;top:201.10px;color:#c4c4c4" width="14.25" height="14.25" viewBox="0 0 24 24"><path fill="currentColor" d="M12 2C8.140 2 5 5.140 5 9c0 5.250 7 13 7 13s7-7.750 7-13c0-3.860-3.140-7-7-7zm0 2c1.100 0 2 .9 2 2 0 1.110-.9 2-2 2s-2-.89-2-2c0-1.100.9-2 2-2zm0 10c-1.670 0-3.140-.85-4-2.150.02-1.320 2.670-2.050 4-2.050s3.980.73 4 2.050c-.86 1.300-2.330 2.150-4 2.150z"/></svg>
<svg class="b" style="left:1364.83px;top:201.10px;color:#c4c4c4" width="14.25" height="14.25" viewBox="0 0 24 24"><path fill="currentColor" d="M19 3H5c-1.100 0-1.990.9-1.990 2L3 19c0 1.100.9 2 2 2h14c1.100 0 2-.9 2-2V5c0-1.100-.9-2-2-2zm-1 11h-4v4h-4v-4H6v-4h4V6h4v4h4v4z"/></svg>
<svg class="b" style="left:1379.06px;top:201.10px;color:#c4c4c4" width="14.25" height="14.25" viewBox="0 0 24 24"><path fill="currentColor" d="M12 2C6.480 2 2 6.480 2 12s4.480 10 10 10 10-4.480 10-10S17.520 2 12 2zm0 18c-4.420 0-8-3.580-8-8s3.580-8 8-8 8 3.580 8 8-3.580 8-8 8z"/></svg>
<svg class="b" style="left:1393.29px;top:201.10px;color:#c4c4c4" width="14.25" height="14.25" viewBox="0 0 24 24"><path fill="currentColor" d="M18 2H6c-1.100 0-2 .9-2 2v16c0 1.100.9 2 2 2h12c1.100 0 2-.9 2-2V4c0-1.100-.9-2-2-2zM6 4h5v8l-2.500-1.500L6 12V4z"/></svg>
<svg class="b" style="left:1407.52px;top:201.10px;color:#c4c4c4" width="14.25" height="14.25" viewBox="0 0 24 24"><path fill="currentColor" d="M19 3h-4.18C14.4 1.84 13.3 1 12 1c-1.3 0-2.4.84-2.82 2H5c-1.1 0-2 .9-2 2v14c0 1.1.9 2 2 2h14c1.1 0 2-.9 2-2V5c0-1.1-.9-2-2-2zm-7 0c.55 0 1 .45 1 1s-.45 1-1 1-1-.45-1-1 .45-1 1-1zm-2 14l-4-4 1.410-1.410L10 14.170l6.590-6.590L18 9l-8 8z"/></svg>
<svg class="b" style="left:1421.75px;top:201.10px;color:#c4c4c4" width="14.25" height="14.25" viewBox="0 0 24 24"><path fill="currentColor" d="M21 5v14h2V5h-2zm-4 14h2V5h-2v14zM14 5H2c-.55 0-1 .45-1 1v12c0 .55.45 1 1 1h12c.55 0 1-.45 1-1V6c0-.55-.45-1-1-1zM8 7.750c1.240 0 2.250 1.010 2.250 2.250S9.240 12.250 8 12.250 5.750 11.240 5.750 10 6.760 7.750 8 7.750zM12.500 17h-9v-.75c0-1.500 3-2.250 4.500-2.250s4.500.75 4.500 2.250V17z"/></svg>
<svg class="b" style="left:1435.98px;top:201.10px;color:#c4c4c4" width="14.25" height="14.25" viewBox="0 0 24 24"><path fill="currentColor" d="M14.400 6L14 4H5v17h2v-7h5.600l.4 2h7V6z"/></svg>
<div class="b" style="left:193.00px;top:226.00px;width:1284.00px;height:1.00px;background:#ececec;"></div>
<div class="b" style="left:205.20px;top:238.79px;width:12.00px;height:12.00px;border:1px solid #979797;border-radius:2px;box-sizing:border-box;background:#fff;"></div>
<span class="t" style="left:236.80px;top:238px;line-height:11px;font-size:10.4px;color:#606060;letter-spacing:-0.629px;">JONES GEORGE</span>
<span class="t" style="left:847.30px;top:237px;line-height:12px;font-size:10.6px;color:#606060;letter-spacing:0.144px;">59022800011</span>
<span class="t" style="left:964.00px;top:237px;line-height:12px;font-size:10.6px;color:#606060;letter-spacing:-0.006px;">17.05.2022</span>
<svg class="b" style="left:1066.00px;top:236.10px;color:#c62828" width="14.25" height="14.25" viewBox="0 0 24 24"><path fill="currentColor" d="M15 3H6c-.83 0-1.54.5-1.84 1.22l-3.02 7.05c-.09.23-.14.47-.14.73v2c0 1.1.9 2 2 2h6.31l-.95 4.57-.03.32c0 .41.17.79.44 1.06L9.83 23l6.59-6.59c.36-.36.58-.86.58-1.41V5c0-1.1-.9-2-2-2zm4 0v10h4V3h-4z"/></svg>
<svg class="b" style="left:1080.23px;top:236.10px;color:#c4c4c4" width="14.25" height="14.25" viewBox="0 0 24 24"><path fill="currentColor" d="M19 3h-4.18C14.4 1.84 13.3 1 12 1c-1.3 0-2.4.84-2.82 2H5c-1.1 0-2 .9-2 2v14c0 1.1.9 2 2 2h14c1.1 0 2-.9 2-2V5c0-1.1-.9-2-2-2zm-6 15h-2v-2h2v2zm0-4h-2V8h2v6zm-1-9c-.55 0-1-.45-1-1s.45-1 1-1 1 .45 1 1-.45 1-1 1z"/></svg>
<svg class="b" style="left:1094.46px;top:236.10px;color:#c4c4c4" width="14.25" height="14.25" viewBox="0 0 24 24"><path fill="currentColor" d="M12 2C6.5 2 2 6.5 2 12s4.5 10 10 10 10-4.5 10-10S17.5 2 12 2zm4.2 14.2L11 13V7h1.5v5.2l4.5 2.7-.8 1.3z"/></svg>
<svg class="b" style="left:1108.69px;top:236.10px;color:#c4c4c4" width="14.25" height="14.25" viewBox="0 0 24 24"><path fill="currentColor" d="M19 3h-4.18C14.4 1.84 13.3 1 12 1c-1.3 0-2.4.84-2.82 2H5c-1.1 0-2 .9-2 2v14c0 1.1.9 2 2 2h14c1.1 0 2-.9 2-2V5c0-1.1-.9-2-2-2zm-7 0c.55 0 1 .45 1 1s-.45 1-1 1-1-.45-1-1 .45-1 1-1zm0 15l-5-5h3V9h4v4h3l-5 5z"/></svg>
<svg class="b" style="left:1122.92px;top:236.10px;color:#c62828" width="14.25" height="14.25" viewBox="0 0 24 24"><path fill="currentColor" d="M19 3h-4.18C14.4 1.84 13.3 1 12 1c-1.3 0-2.4.84-2.82 2H5c-1.1 0-2 .9-2 2v14c0 1.1.9 2 2 2h14c1.1 0 2-.9 2-2V5c0-1.1-.9-2-2-2zm-7 0c.55 0 1 .45 1 1s-.45 1-1 1-1-.45-1-1 .45-1 1-1zm4 12h-4v3l-5-5 5-5v3h4v4z"/></svg>
<svg class="b" style="left:1137.15px;top:236.10px;color:#c4c4c4" width="14.25" height="14.25" viewBox="0 0 24 24"><path fill="currentColor" d="M19 3h-4.18C14.4 1.84 13.3 1 12 1c-1.3 0-2.4.84-2.82 2H5c-1.1 0-2 .9-2 2v14c0 1.1.9 2 2 2h14c1.1 0 2-.9 2-2V5c0-1.1-.9-2-2-2zm-7 0c.55 0 1 .45 1 1s-.45 1-1 1-1-.45-1-1 .45-1 1-1zm0 4c1.66 0 3 1.34 3 3s-1.34 3-3 3-3-1.34-3-3 1.34-3 3-3zm6 12H6v-1.4c0-2 4-3.1 6-3.1s6 1.1 6 3.1V19z"/></svg>
<svg class="b" style="left:1151.38px;top:236.10px;color:#c62828" width="14.25" height="14.25" viewBox="0 0 24 24"><path fill="currentColor" d="M19 3h-4.18C14.4 1.84 13.3 1 12 1c-1.3 0-2.4.84-2.82 2H5c-1.1 0-2 .9-2 2v14c0 1.1.9 2 2 2h14c1.1 0 2-.9 2-2V5c0-1.1-.9-2-2-2zm-7 0c.55 0 1 .45 1 1s-.45 1-1 1-1-.45-1-1 .45-1 1-1zm2 14H7v-2h7v2zm3-4H7v-2h10v2zm0-4H7V7h10v2z"/></svg>
<svg class="b" style="left:1165.61px;top:236.10px;color:#c4c4c4" width="14.25" height="14.25" viewBox="0 0 24 24"><path fill="currentColor" d="M12 6.5c1.38 0 2.5 1.12 2.5 2.5 0 .74-.33 1.39-.83 1.85l3.63 3.63c.98-1.86 1.7-3.8 1.7-5.48 0-3.87-3.13-7-7-7-1.98 0-3.76.83-5.04 2.15l3.19 3.19c.46-.52 1.11-.84 1.85-.84zm4.37 9.6l-4.63-4.63-.11-.11L3.27 3 2 4.27l3.18 3.18C5.07 7.95 5 8.47 5 9c0 5.250 7 13 7 13s1.670-1.850 3.380-4.350L18.730 21 20 19.730l-3.630-3.630z"/></svg>
<svg class="b" style="left:1179.84px;top:236.10px;color:#c4c4c4" width="14.25" height="14.25" viewBox="0 0 24 24"><path fill="currentColor" fill-rule="evenodd" d="M2 2h20v20H2zM4.5 4.8h4v2.400h-4zM10 4.8h4v2.400h-4zM15.5 4.8h4v2.400h-4zM4.5 10.8h4v2.400h-4zM10 10.8h4v2.400h-4zM15.5 10.8h4v2.400h-4zM4.5 16.8h4v2.400h-4zM10 16.8h4v2.400h-4zM15.5 16.8h4v2.400h-4z"/><path d="M2.300 0.700L23.300 21.700" stroke="#fff" stroke-width="1.300" fill="none"/><path d="M0.800 1.700L22.300 23.200" stroke="currentColor" stroke-width="1.800" fill="none"/></svg>
<svg class="b" style="left:1194.07px;top:236.10px;color:#c62828" width="14.25" height="14.25" viewBox="0 0 24 24"><path fill="currentColor" d="M12 2C6.48 2 2 6.48 2 12s4.480 10 10 10 10-4.480 10-10S17.520 2 12 2zm-1 17.930c-3.950-.490-7-3.850-7-7.930 0-.620.080-1.210.210-1.790L9 15v1c0 1.100.9 2 2 2v1.930zm6.900-2.540c-.260-.810-1-1.390-1.900-1.390h-1v-3c0-.550-.450-1-1-1H8v-2h2c.550 0 1-.450 1-1V7h2c1.100 0 2-.9 2-2v-.410c2.930 1.190 5 4.060 5 7.410 0 2.080-.8 3.970-2.100 5.390z"/></svg>
<svg class="b" style="left:1208.30px;top:236.10px;color:#42a5f5" width="14.25" height="14.25" viewBox="0 0 24 24"><path fill="currentColor" d="M12 11.550C9.640 9.350 6.480 8 3 8v11c3.480 0 6.640 1.350 9 3.550 2.360-2.190 5.520-3.550 9-3.550V8c-3.480 0-6.640 1.350-9 3.550zM12 8c1.660 0 3-1.340 3-3s-1.340-3-3-3-3 1.340-3 3 1.340 3 3 3z"/></svg>
<svg class="b" style="left:1222.53px;top:236.10px;color:#c4c4c4" width="14.25" height="14.25" viewBox="0 0 24 24"><path fill="currentColor" d="M17 3H7c-1.100 0-1.990.9-1.990 2L5 21l7-3 7 3V5c0-1.100-.9-2-2-2z"/></svg>
<svg class="b" style="left:1236.76px;top:236.10px;color:#c4c4c4" width="14.25" height="14.25" viewBox="0 0 24 24"><path fill="currentColor" d="M17 3H7c-1.100 0-1.990.9-1.990 2L5 21l7-3 7 3V5c0-1.100-.9-2-2-2zm0 15l-5-2.180L7 18V5h10v13z"/></svg>
<svg class="b" style="left:1250.99px;top:236.10px;color:#c4c4c4" width="14.25" height="14.25" viewBox="0 0 24 24"><path fill="currentColor" d="M12 1L3 5v6c0 5.550 3.840 10.740 9 12 5.160-1.260 9-6.450 9-12V5l-9-4zm-2 16l-4-4 1.410-1.410L10 14.170l6.590-6.590L18 9l-8 8z"/></svg>
<svg class="b" style="left:1265.22px;top:236.10px;color:#c4c4c4" width="14.25" height="14.25" viewBox="0 0 24 24"><path fill="currentColor" d="M12 1L3 5v6c0 5.550 3.840 10.740 9 12 5.160-1.260 9-6.450 9-12V5l-9-4zm0 10.990h7c-.530 4.120-3.280 7.790-7 8.940V12H5V6.300l7-3.110v8.800z"/></svg>
<svg class="b" style="left:1279.45px;top:236.10px;color:#c4c4c4" width="14.25" height="14.25" viewBox="0 0 24 24"><path fill="currentColor" d="M3 3.500h8V11H3zM3 13.500h8V21H3zM13 13.500h8V21h-8zM12.500 5H17V1.800l6 5.450-6 5.450V9.500h-4.500zM16 11h2v3h-2z"/></svg>
<svg class="b" style="left:1293.68px;top:236.10px;color:#c4c4c4" width="14.25" height="14.25" viewBox="0 0 24 24"><path fill="currentColor" d="M4 16c0 .880.390 1.670 1 2.220V20c0 .550.450 1 1 1h1c.550 0 1-.450 1-1v-1h8v1c0 .550.450 1 1 1h1c.550 0 1-.450 1-1v-1.780c.610-.550 1-1.340 1-2.220V6c0-3.500-3.580-4-8-4s-8 .5-8 4v10zm3.500 1c-.830 0-1.500-.670-1.500-1.500S6.670 14 7.500 14s1.500.670 1.500 1.500S8.330 17 7.500 17zm9 0c-.830 0-1.500-.670-1.500-1.500s.670-1.500 1.500-1.500 1.500.670 1.500 1.500-.670 1.500-1.500 1.500zm1.500-6H6V6h12v5z"/></svg>
<svg class="b" style="left:1307.91px;top:236.10px;color:#42a5f5" width="14.25" height="14.25" viewBox="0 0 24 24"><path fill="currentColor" d="M20.500 11H19V7c0-1.100-.9-2-2-2h-4V3.500C13 2.120 11.880 1 10.500 1S8 2.120 8 3.500V5H4c-1.100 0-1.990.9-1.990 2v3.800H3.500c1.490 0 2.700 1.210 2.700 2.700s-1.210 2.700-2.700 2.700H2V20c0 1.100.9 2 2 2h3.800v-1.500c0-1.490 1.210-2.700 2.700-2.700 1.490 0 2.700 1.210 2.700 2.700V22H17c1.100 0 2-.9 2-2v-4h1.500c1.380 0 2.500-1.120 2.500-2.500S21.880 11 20.500 11z"/></svg>
<svg class="b" style="left:1322.14px;top:236.10px;color:#42a5f5" width="14.25" height="14.25" viewBox="0 0 24 24"><path fill="currentColor" d="M12 2C6.480 2 2 6.480 2 12s4.480 10 10 10 10-4.480 10-10S17.520 2 12 2zm1.410 16.090V20h-2.670v-1.930c-1.710-.360-3.160-1.460-3.270-3.400h1.960c.100 1.050.820 1.870 2.650 1.870 1.960 0 2.400-.980 2.400-1.590 0-.830-.440-1.610-2.670-2.140-2.480-.6-4.180-1.620-4.180-3.670 0-1.720 1.390-2.840 3.110-3.210V4h2.670v1.950c1.860.450 2.790 1.860 2.850 3.390H14.300c-.050-1.110-.640-1.870-2.220-1.870-1.500 0-2.400.680-2.400 1.640 0 .840.650 1.390 2.670 1.910s4.180 1.390 4.180 3.910c-.010 1.830-1.380 2.830-3.120 3.160z"/></svg>
<svg class="b" style="left:1336.37px;top:236.10px;color:#42a5f5" width="14.25" height="14.25" viewBox="0 0 24 24"><path fill="currentColor" d="M12 2c1.100 0 2 .9 2 2s-.9 2-2 2-2-.9-2-2 .9-2 2-2zM19 13v-2c-1.540.02-3.090-.75-4.070-1.830l-1.290-1.430c-.17-.19-.38-.34-.61-.45-.01 0-.01-.01-.02-.01H13c-.35-.2-.75-.3-1.190-.26C10.760 7.110 10 8.040 10 9.090V15c0 1.100.9 2 2 2h5v5h2v-5.500c0-1.100-.9-2-2-2h-3v-3.450c1.290 1.070 3.250 1.940 5 1.950zm-6.170 5c-.41 1.160-1.520 2-2.830 2-1.660 0-3-1.340-3-3 0-1.310.84-2.410 2-2.830V12.100c-2.280.46-4 2.480-4 4.900 0 2.760 2.240 5 5 5 2.420 0 4.440-1.720 4.900-4h-2.070z"/></svg>
<svg class="b" style="left:1350.60px;top:236.10px;color:#42a5f5" width="14.25" height="14.25" viewBox="0 0 24 24"><path fill="currentColor" d="M12 2C8.140 2 5 5.140 5 9c0 5.250 7 13 7 13s7-7.750 7-13c0-3.860-3.140-7-7-7zm0 2c1.100 0 2 .9 2 2 0 1.110-.9 2-2 2s-2-.89-2-2c0-1.100.9-2 2-2zm0 10c-1.670 0-3.140-.85-4-2.150.02-1.320 2.670-2.050 4-2.050s3.980.73 4 2.050c-.86 1.300-2.330 2.150-4 2.150z"/></svg>
<svg class="b" style="left:1364.83px;top:236.10px;color:#42a5f5" width="14.25" height="14.25" viewBox="0 0 24 24"><path fill="currentColor" d="M19 3H5c-1.100 0-1.990.9-1.990 2L3 19c0 1.100.9 2 2 2h14c1.100 0 2-.9 2-2V5c0-1.100-.9-2-2-2zm-1 11h-4v4h-4v-4H6v-4h4V6h4v4h4v4z"/></svg>
<svg class="b" style="left:1379.06px;top:236.10px;color:#c4c4c4" width="14.25" height="14.25" viewBox="0 0 24 24"><path fill="currentColor" d="M12 2C6.480 2 2 6.480 2 12s4.480 10 10 10 10-4.480 10-10S17.520 2 12 2zm0 18c-4.420 0-8-3.580-8-8s3.580-8 8-8 8 3.580 8 8-3.580 8-8 8z"/></svg>
<svg class="b" style="left:1393.29px;top:236.10px;color:#c4c4c4" width="14.25" height="14.25" viewBox="0 0 24 24"><path fill="currentColor" d="M18 2H6c-1.100 0-2 .9-2 2v16c0 1.100.9 2 2 2h12c1.100 0 2-.9 2-2V4c0-1.100-.9-2-2-2zM6 4h5v8l-2.500-1.500L6 12V4z"/></svg>
<svg class="b" style="left:1407.52px;top:236.10px;color:#c4c4c4" width="14.25" height="14.25" viewBox="0 0 24 24"><path fill="currentColor" d="M19 3h-4.18C14.4 1.84 13.3 1 12 1c-1.3 0-2.4.84-2.82 2H5c-1.1 0-2 .9-2 2v14c0 1.1.9 2 2 2h14c1.1 0 2-.9 2-2V5c0-1.1-.9-2-2-2zm-7 0c.55 0 1 .45 1 1s-.45 1-1 1-1-.45-1-1 .45-1 1-1zm-2 14l-4-4 1.410-1.410L10 14.170l6.590-6.590L18 9l-8 8z"/></svg>
<svg class="b" style="left:1421.75px;top:236.10px;color:#c4c4c4" width="14.25" height="14.25" viewBox="0 0 24 24"><path fill="currentColor" d="M21 5v14h2V5h-2zm-4 14h2V5h-2v14zM14 5H2c-.55 0-1 .45-1 1v12c0 .55.45 1 1 1h12c.55 0 1-.45 1-1V6c0-.55-.45-1-1-1zM8 7.750c1.240 0 2.250 1.010 2.250 2.250S9.240 12.250 8 12.250 5.750 11.240 5.750 10 6.760 7.750 8 7.750zM12.500 17h-9v-.75c0-1.500 3-2.250 4.500-2.250s4.500.75 4.500 2.250V17z"/></svg>
<svg class="b" style="left:1435.98px;top:236.10px;color:#c4c4c4" width="14.25" height="14.25" viewBox="0 0 24 24"><path fill="currentColor" d="M14.400 6L14 4H5v17h2v-7h5.600l.4 2h7V6z"/></svg>
<div class="b" style="left:193.00px;top:261.00px;width:1284.00px;height:1.00px;background:#ececec;"></div>
<div class="b" style="left:205.20px;top:273.82px;width:12.00px;height:12.00px;border:1px solid #979797;border-radius:2px;box-sizing:border-box;background:#fff;"></div>
<span class="t" style="left:236.80px;top:273px;line-height:11px;font-size:10.4px;color:#606060;letter-spacing:-0.286px;">BARAN ALEKSANDER</span>
<span class="t" style="left:847.30px;top:272px;line-height:12px;font-size:10.6px;color:#606060;letter-spacing:0.065px;">63020600016</span>
<span class="t" style="left:964.00px;top:272px;line-height:12px;font-size:10.6px;color:#606060;letter-spacing:-0.006px;">17.05.2022</span>
<svg class="b" style="left:1066.00px;top:271.10px;color:#c4c4c4" width="14.25" height="14.25" viewBox="0 0 24 24"><path fill="currentColor" d="M15 3H6c-.83 0-1.54.5-1.84 1.22l-3.02 7.05c-.09.23-.14.47-.14.73v2c0 1.1.9 2 2 2h6.31l-.95 4.57-.03.32c0 .41.17.79.44 1.06L9.83 23l6.59-6.59c.36-.36.58-.86.58-1.41V5c0-1.1-.9-2-2-2zm4 0v10h4V3h-4z"/></svg>
<svg class="b" style="left:1080.23px;top:271.10px;color:#c4c4c4" width="14.25" height="14.25" viewBox="0 0 24 24"><path fill="currentColor" d="M19 3h-4.18C14.4 1.84 13.3 1 12 1c-1.3 0-2.4.84-2.82 2H5c-1.1 0-2 .9-2 2v14c0 1.1.9 2 2 2h14c1.1 0 2-.9 2-2V5c0-1.1-.9-2-2-2zm-6 15h-2v-2h2v2zm0-4h-2V8h2v6zm-1-9c-.55 0-1-.45-1-1s.45-1 1-1 1 .45 1 1-.45 1-1 1z"/></svg>
<svg class="b" style="left:1094.46px;top:271.10px;color:#c4c4c4" width="14.25" height="14.25" viewBox="0 0 24 24"><path fill="currentColor" d="M12 2C6.5 2 2 6.5 2 12s4.5 10 10 10 10-4.5 10-10S17.5 2 12 2zm4.2 14.2L11 13V7h1.5v5.2l4.5 2.7-.8 1.3z"/></svg>
<svg class="b" style="left:1108.69px;top:271.10px;color:#c4c4c4" width="14.25" height="14.25" viewBox="0 0 24 24"><path fill="currentColor" d="M19 3h-4.18C14.4 1.84 13.3 1 12 1c-1.3 0-2.4.84-2.82 2H5c-1.1 0-2 .9-2 2v14c0 1.1.9 2 2 2h14c1.1 0 2-.9 2-2V5c0-1.1-.9-2-2-2zm-7 0c.55 0 1 .45 1 1s-.45 1-1 1-1-.45-1-1 .45-1 1-1zm0 15l-5-5h3V9h4v4h3l-5 5z"/></svg>
<svg class="b" style="left:1122.92px;top:271.10px;color:#c4c4c4" width="14.25" height="14.25" viewBox="0 0 24 24"><path fill="currentColor" d="M19 3h-4.18C14.4 1.84 13.3 1 12 1c-1.3 0-2.4.84-2.82 2H5c-1.1 0-2 .9-2 2v14c0 1.1.9 2 2 2h14c1.1 0 2-.9 2-2V5c0-1.1-.9-2-2-2zm-7 0c.55 0 1 .45 1 1s-.45 1-1 1-1-.45-1-1 .45-1 1-1zm4 12h-4v3l-5-5 5-5v3h4v4z"/></svg>
<svg class="b" style="left:1137.15px;top:271.10px;color:#c4c4c4" width="14.25" height="14.25" viewBox="0 0 24 24"><path fill="currentColor" d="M19 3h-4.18C14.4 1.84 13.3 1 12 1c-1.3 0-2.4.84-2.82 2H5c-1.1 0-2 .9-2 2v14c0 1.1.9 2 2 2h14c1.1 0 2-.9 2-2V5c0-1.1-.9-2-2-2zm-7 0c.55 0 1 .45 1 1s-.45 1-1 1-1-.45-1-1 .45-1 1-1zm0 4c1.66 0 3 1.34 3 3s-1.34 3-3 3-3-1.34-3-3 1.34-3 3-3zm6 12H6v-1.4c0-2 4-3.1 6-3.1s6 1.1 6 3.1V19z"/></svg>
<svg class="b" style="left:1151.38px;top:271.10px;color:#c4c4c4" width="14.25" height="14.25" viewBox="0 0 24 24"><path fill="currentColor" d="M19 3h-4.18C14.4 1.84 13.3 1 12 1c-1.3 0-2.4.84-2.82 2H5c-1.1 0-2 .9-2 2v14c0 1.1.9 2 2 2h14c1.1 0 2-.9 2-2V5c0-1.1-.9-2-2-2zm-7 0c.55 0 1 .45 1 1s-.45 1-1 1-1-.45-1-1 .45-1 1-1zm2 14H7v-2h7v2zm3-4H7v-2h10v2zm0-4H7V7h10v2z"/></svg>
<svg class="b" style="left:1165.61px;top:271.10px;color:#c4c4c4" width="14.25" height="14.25" viewBox="0 0 24 24"><path fill="currentColor" d="M12 6.5c1.38 0 2.5 1.12 2.5 2.5 0 .74-.33 1.39-.83 1.85l3.63 3.63c.98-1.86 1.7-3.8 1.7-5.48 0-3.87-3.13-7-7-7-1.98 0-3.76.83-5.04 2.15l3.19 3.19c.46-.52 1.11-.84 1.85-.84zm4.37 9.6l-4.63-4.63-.11-.11L3.27 3 2 4.27l3.18 3.18C5.07 7.95 5 8.47 5 9c0 5.250 7 13 7 13s1.670-1.850 3.380-4.350L18.730 21 20 19.730l-3.630-3.630z"/></svg>
<svg class="b" style="left:1179.84px;top:271.10px;color:#c4c4c4" width="14.25" height="14.25" viewBox="0 0 24 24"><path fill="currentColor" fill-rule="evenodd" d="M2 2h20v20H2zM4.5 4.8h4v2.400h-4zM10 4.8h4v2.400h-4zM15.5 4.8h4v2.400h-4zM4.5 10.8h4v2.400h-4zM10 10.8h4v2.400h-4zM15.5 10.8h4v2.400h-4zM4.5 16.8h4v2.400h-4zM10 16.8h4v2.400h-4zM15.5 16.8h4v2.400h-4z"/><path d="M2.300 0.700L23.300 21.700" stroke="#fff" stroke-width="1.300" fill="none"/><path d="M0.800 1.700L22.300 23.200" stroke="currentColor" stroke-width="1.800" fill="none"/></svg>
<svg class="b" style="left:1194.07px;top:271.10px;color:#c4c4c4" width="14.25" height="14.25" viewBox="0 0 24 24"><path fill="currentColor" d="M12 2C6.48 2 2 6.48 2 12s4.480 10 10 10 10-4.480 10-10S17.520 2 12 2zm-1 17.930c-3.950-.490-7-3.850-7-7.930 0-.620.080-1.210.210-1.790L9 15v1c0 1.100.9 2 2 2v1.930zm6.900-2.540c-.260-.810-1-1.390-1.900-1.390h-1v-3c0-.550-.450-1-1-1H8v-2h2c.550 0 1-.450 1-1V7h2c1.100 0 2-.9 2-2v-.410c2.930 1.190 5 4.060 5 7.410 0 2.080-.8 3.970-2.100 5.390z"/></svg>
<svg class="b" style="left:1208.30px;top:271.10px;color:#c4c4c4" width="14.25" height="14.25" viewBox="0 0 24 24"><path fill="currentColor" d="M12 11.550C9.640 9.350 6.480 8 3 8v11c3.480 0 6.640 1.350 9 3.550 2.360-2.190 5.520-3.550 9-3.550V8c-3.480 0-6.640 1.350-9 3.550zM12 8c1.660 0 3-1.340 3-3s-1.340-3-3-3-3 1.340-3 3 1.340 3 3 3z"/></svg>
<svg class="b" style="left:1222.53px;top:271.10px;color:#c4c4c4" width="14.25" height="14.25" viewBox="0 0 24 24"><path fill="currentColor" d="M17 3H7c-1.100 0-1.990.9-1.990 2L5 21l7-3 7 3V5c0-1.100-.9-2-2-2z"/></svg>
<svg class="b" style="left:1236.76px;top:271.10px;color:#c4c4c4" width="14.25" height="14.25" viewBox="0 0 24 24"><path fill="currentColor" d="M17 3H7c-1.100 0-1.990.9-1.990 2L5 21l7-3 7 3V5c0-1.100-.9-2-2-2zm0 15l-5-2.180L7 18V5h10v13z"/></svg>
<svg class="b" style="left:1250.99px;top:271.10px;color:#c4c4c4" width="14.25" height="14.25" viewBox="0 0 24 24"><path fill="currentColor" d="M12 1L3 5v6c0 5.550 3.840 10.740 9 12 5.160-1.260 9-6.450 9-12V5l-9-4zm-2 16l-4-4 1.410-1.410L10 14.170l6.590-6.590L18 9l-8 8z"/></svg>
<svg class="b" style="left:1265.22px;top:271.10px;color:#c4c4c4" width="14.25" height="14.25" viewBox="0 0 24 24"><path fill="currentColor" d="M12 1L3 5v6c0 5.550 3.840 10.740 9 12 5.160-1.260 9-6.450 9-12V5l-9-4zm0 10.990h7c-.530 4.120-3.280 7.790-7 8.940V12H5V6.300l7-3.110v8.800z"/></svg>
<svg class="b" style="left:1279.45px;top:271.10px;color:#c4c4c4" width="14.25" height="14.25" viewBox="0 0 24 24"><path fill="currentColor" d="M3 3.500h8V11H3zM3 13.500h8V21H3zM13 13.500h8V21h-8zM12.500 5H17V1.800l6 5.450-6 5.450V9.500h-4.500zM16 11h2v3h-2z"/></svg>
<svg class="b" style="left:1293.68px;top:271.10px;color:#c4c4c4" width="14.25" height="14.25" viewBox="0 0 24 24"><path fill="currentColor" d="M4 16c0 .880.390 1.670 1 2.220V20c0 .550.450 1 1 1h1c.550 0 1-.450 1-1v-1h8v1c0 .550.450 1 1 1h1c.550 0 1-.450 1-1v-1.780c.610-.550 1-1.340 1-2.220V6c0-3.500-3.580-4-8-4s-8 .5-8 4v10zm3.500 1c-.830 0-1.500-.670-1.500-1.500S6.670 14 7.500 14s1.500.670 1.500 1.500S8.330 17 7.500 17zm9 0c-.830 0-1.500-.670-1.500-1.500s.670-1.500 1.500-1.500 1.500.670 1.500 1.500-.670 1.500-1.500 1.500zm1.500-6H6V6h12v5z"/></svg>
<svg class="b" style="left:1307.91px;top:271.10px;color:#c4c4c4" width="14.25" height="14.25" viewBox="0 0 24 24"><path fill="currentColor" d="M20.500 11H19V7c0-1.100-.9-2-2-2h-4V3.500C13 2.120 11.880 1 10.500 1S8 2.120 8 3.500V5H4c-1.100 0-1.990.9-1.990 2v3.800H3.500c1.490 0 2.700 1.210 2.700 2.700s-1.210 2.700-2.700 2.700H2V20c0 1.100.9 2 2 2h3.800v-1.500c0-1.490 1.210-2.700 2.700-2.700 1.490 0 2.700 1.210 2.700 2.700V22H17c1.100 0 2-.9 2-2v-4h1.500c1.380 0 2.500-1.120 2.500-2.500S21.880 11 20.500 11z"/></svg>
<svg class="b" style="left:1322.14px;top:271.10px;color:#c4c4c4" width="14.25" height="14.25" viewBox="0 0 24 24"><path fill="currentColor" d="M12 2C6.480 2 2 6.480 2 12s4.480 10 10 10 10-4.480 10-10S17.520 2 12 2zm1.410 16.090V20h-2.670v-1.930c-1.710-.360-3.160-1.460-3.270-3.400h1.960c.100 1.050.820 1.870 2.650 1.870 1.960 0 2.400-.980 2.400-1.590 0-.830-.440-1.610-2.670-2.140-2.480-.6-4.180-1.620-4.180-3.670 0-1.720 1.390-2.840 3.110-3.210V4h2.670v1.950c1.860.450 2.790 1.860 2.850 3.390H14.300c-.050-1.110-.640-1.870-2.220-1.870-1.500 0-2.400.680-2.400 1.640 0 .840.650 1.390 2.670 1.910s4.180 1.390 4.180 3.910c-.010 1.830-1.380 2.830-3.120 3.160z"/></svg>
<svg class="b" style="left:1336.37px;top:271.10px;color:#c4c4c4" width="14.25" height="14.25" viewBox="0 0 24 24"><path fill="currentColor" d="M12 2c1.100 0 2 .9 2 2s-.9 2-2 2-2-.9-2-2 .9-2 2-2zM19 13v-2c-1.540.02-3.090-.75-4.070-1.830l-1.290-1.430c-.17-.19-.38-.34-.61-.45-.01 0-.01-.01-.02-.01H13c-.35-.2-.75-.3-1.190-.26C10.760 7.110 10 8.040 10 9.090V15c0 1.100.9 2 2 2h5v5h2v-5.500c0-1.100-.9-2-2-2h-3v-3.450c1.290 1.070 3.250 1.940 5 1.950zm-6.170 5c-.41 1.160-1.520 2-2.830 2-1.660 0-3-1.340-3-3 0-1.310.84-2.410 2-2.830V12.100c-2.280.46-4 2.480-4 4.900 0 2.760 2.240 5 5 5 2.420 0 4.440-1.720 4.900-4h-2.070z"/></svg>
<svg class="b" style="left:1350.60px;top:271.10px;color:#42a5f5" width="14.25" height="14.25" viewBox="0 0 24 24"><path fill="currentColor" d="M12 2C8.140 2 5 5.140 5 9c0 5.250 7 13 7 13s7-7.750 7-13c0-3.860-3.140-7-7-7zm0 2c1.100 0 2 .9 2 2 0 1.110-.9 2-2 2s-2-.89-2-2c0-1.100.9-2 2-2zm0 10c-1.670 0-3.140-.85-4-2.150.02-1.320 2.670-2.050 4-2.050s3.980.73 4 2.050c-.86 1.300-2.330 2.150-4 2.150z"/></svg>
<svg class="b" style="left:1364.83px;top:271.10px;color:#c4c4c4" width="14.25" height="14.25" viewBox="0 0 24 24"><path fill="currentColor" d="M19 3H5c-1.100 0-1.990.9-1.990 2L3 19c0 1.100.9 2 2 2h14c1.100 0 2-.9 2-2V5c0-1.100-.9-2-2-2zm-1 11h-4v4h-4v-4H6v-4h4V6h4v4h4v4z"/></svg>
<svg class="b" style="left:1379.06px;top:271.10px;color:#c4c4c4" width="14.25" height="14.25" viewBox="0 0 24 24"><path fill="currentColor" d="M12 2C6.480 2 2 6.480 2 12s4.480 10 10 10 10-4.480 10-10S17.520 2 12 2zm0 18c-4.420 0-8-3.580-8-8s3.580-8 8-8 8 3.580 8 8-3.580 8-8 8z"/></svg>
<svg class="b" style="left:1393.29px;top:271.10px;color:#c4c4c4" width="14.25" height="14.25" viewBox="0 0 24 24"><path fill="currentColor" d="M18 2H6c-1.100 0-2 .9-2 2v16c0 1.100.9 2 2 2h12c1.100 0 2-.9 2-2V4c0-1.100-.9-2-2-2zM6 4h5v8l-2.500-1.500L6 12V4z"/></svg>
<svg class="b" style="left:1407.52px;top:271.10px;color:#c4c4c4" width="14.25" height="14.25" viewBox="0 0 24 24"><path fill="currentColor" d="M19 3h-4.18C14.4 1.84 13.3 1 12 1c-1.3 0-2.4.84-2.82 2H5c-1.1 0-2 .9-2 2v14c0 1.1.9 2 2 2h14c1.1 0 2-.9 2-2V5c0-1.1-.9-2-2-2zm-7 0c.55 0 1 .45 1 1s-.45 1-1 1-1-.45-1-1 .45-1 1-1zm-2 14l-4-4 1.410-1.410L10 14.170l6.590-6.590L18 9l-8 8z"/></svg>
<svg class="b" style="left:1421.75px;top:271.10px;color:#c4c4c4" width="14.25" height="14.25" viewBox="0 0 24 24"><path fill="currentColor" d="M21 5v14h2V5h-2zm-4 14h2V5h-2v14zM14 5H2c-.55 0-1 .45-1 1v12c0 .55.45 1 1 1h12c.55 0 1-.45 1-1V6c0-.55-.45-1-1-1zM8 7.750c1.240 0 2.250 1.010 2.250 2.250S9.240 12.250 8 12.250 5.750 11.240 5.750 10 6.760 7.750 8 7.750zM12.500 17h-9v-.75c0-1.500 3-2.250 4.500-2.250s4.500.75 4.500 2.250V17z"/></svg>
<svg class="b" style="left:1435.98px;top:271.10px;color:#42a5f5" width="14.25" height="14.25" viewBox="0 0 24 24"><path fill="currentColor" d="M14.400 6L14 4H5v17h2v-7h5.600l.4 2h7V6z"/></svg>
<div class="b" style="left:193.00px;top:297.00px;width:1284.00px;height:1.00px;background:#ececec;"></div>
<div class="b" style="left:205.20px;top:308.85px;width:12.00px;height:12.00px;border:1px solid #979797;border-radius:2px;box-sizing:border-box;background:#fff;"></div>
<span class="t" style="left:236.80px;top:308px;line-height:11px;font-size:10.4px;color:#606060;letter-spacing:-0.263px;">KUDAS ANDRII</span>
<span class="t" style="left:847.30px;top:307px;line-height:12px;font-size:10.6px;color:#606060;letter-spacing:0.065px;">07302412214</span>
<span class="t" style="left:964.00px;top:307px;line-height:12px;font-size:10.6px;color:#606060;letter-spacing:-0.006px;">23.10.2020</span>
<svg class="b" style="left:1066.00px;top:306.10px;color:#c62828" width="14.25" height="14.25" viewBox="0 0 24 24"><path fill="currentColor" d="M15 3H6c-.83 0-1.54.5-1.84 1.22l-3.02 7.05c-.09.23-.14.47-.14.73v2c0 1.1.9 2 2 2h6.31l-.95 4.57-.03.32c0 .41.17.79.44 1.06L9.83 23l6.59-6.59c.36-.36.58-.86.58-1.41V5c0-1.1-.9-2-2-2zm4 0v10h4V3h-4z"/></svg>
<svg class="b" style="left:1080.23px;top:306.10px;color:#c4c4c4" width="14.25" height="14.25" viewBox="0 0 24 24"><path fill="currentColor" d="M19 3h-4.18C14.4 1.84 13.3 1 12 1c-1.3 0-2.4.84-2.82 2H5c-1.1 0-2 .9-2 2v14c0 1.1.9 2 2 2h14c1.1 0 2-.9 2-2V5c0-1.1-.9-2-2-2zm-6 15h-2v-2h2v2zm0-4h-2V8h2v6zm-1-9c-.55 0-1-.45-1-1s.45-1 1-1 1 .45 1 1-.45 1-1 1z"/></svg>
<svg class="b" style="left:1094.46px;top:306.10px;color:#c62828" width="14.25" height="14.25" viewBox="0 0 24 24"><path fill="currentColor" d="M12 2C6.5 2 2 6.5 2 12s4.5 10 10 10 10-4.5 10-10S17.5 2 12 2zm4.2 14.2L11 13V7h1.5v5.2l4.5 2.7-.8 1.3z"/></svg>
<svg class="b" style="left:1108.69px;top:306.10px;color:#c4c4c4" width="14.25" height="14.25" viewBox="0 0 24 24"><path fill="currentColor" d="M19 3h-4.18C14.4 1.84 13.3 1 12 1c-1.3 0-2.4.84-2.82 2H5c-1.1 0-2 .9-2 2v14c0 1.1.9 2 2 2h14c1.1 0 2-.9 2-2V5c0-1.1-.9-2-2-2zm-7 0c.55 0 1 .45 1 1s-.45 1-1 1-1-.45-1-1 .45-1 1-1zm0 15l-5-5h3V9h4v4h3l-5 5z"/></svg>
<svg class="b" style="left:1122.92px;top:306.10px;color:#c4c4c4" width="14.25" height="14.25" viewBox="0 0 24 24"><path fill="currentColor" d="M19 3h-4.18C14.4 1.84 13.3 1 12 1c-1.3 0-2.4.84-2.82 2H5c-1.1 0-2 .9-2 2v14c0 1.1.9 2 2 2h14c1.1 0 2-.9 2-2V5c0-1.1-.9-2-2-2zm-7 0c.55 0 1 .45 1 1s-.45 1-1 1-1-.45-1-1 .45-1 1-1zm4 12h-4v3l-5-5 5-5v3h4v4z"/></svg>
<svg class="b" style="left:1137.15px;top:306.10px;color:#c4c4c4" width="14.25" height="14.25" viewBox="0 0 24 24"><path fill="currentColor" d="M19 3h-4.18C14.4 1.84 13.3 1 12 1c-1.3 0-2.4.84-2.82 2H5c-1.1 0-2 .9-2 2v14c0 1.1.9 2 2 2h14c1.1 0 2-.9 2-2V5c0-1.1-.9-2-2-2zm-7 0c.55 0 1 .45 1 1s-.45 1-1 1-1-.45-1-1 .45-1 1-1zm0 4c1.66 0 3 1.34 3 3s-1.34 3-3 3-3-1.34-3-3 1.34-3 3-3zm6 12H6v-1.4c0-2 4-3.1 6-3.1s6 1.1 6 3.1V19z"/></svg>
<svg class="b" style="left:1151.38px;top:306.10px;color:#c4c4c4" width="14.25" height="14.25" viewBox="0 0 24 24"><path fill="currentColor" d="M19 3h-4.18C14.4 1.84 13.3 1 12 1c-1.3 0-2.4.84-2.82 2H5c-1.1 0-2 .9-2 2v14c0 1.1.9 2 2 2h14c1.1 0 2-.9 2-2V5c0-1.1-.9-2-2-2zm-7 0c.55 0 1 .45 1 1s-.45 1-1 1-1-.45-1-1 .45-1 1-1zm2 14H7v-2h7v2zm3-4H7v-2h10v2zm0-4H7V7h10v2z"/></svg>
<svg class="b" style="left:1165.61px;top:306.10px;color:#c4c4c4" width="14.25" height="14.25" viewBox="0 0 24 24"><path fill="currentColor" d="M12 6.5c1.38 0 2.5 1.12 2.5 2.5 0 .74-.33 1.39-.83 1.85l3.63 3.63c.98-1.86 1.7-3.8 1.7-5.48 0-3.87-3.13-7-7-7-1.98 0-3.76.83-5.04 2.15l3.19 3.19c.46-.52 1.11-.84 1.85-.84zm4.37 9.6l-4.63-4.63-.11-.11L3.27 3 2 4.27l3.18 3.18C5.07 7.95 5 8.47 5 9c0 5.250 7 13 7 13s1.670-1.850 3.380-4.350L18.730 21 20 19.730l-3.630-3.630z"/></svg>
<svg class="b" style="left:1179.84px;top:306.10px;color:#c4c4c4" width="14.25" height="14.25" viewBox="0 0 24 24"><path fill="currentColor" fill-rule="evenodd" d="M2 2h20v20H2zM4.5 4.8h4v2.400h-4zM10 4.8h4v2.400h-4zM15.5 4.8h4v2.400h-4zM4.5 10.8h4v2.400h-4zM10 10.8h4v2.400h-4zM15.5 10.8h4v2.400h-4zM4.5 16.8h4v2.400h-4zM10 16.8h4v2.400h-4zM15.5 16.8h4v2.400h-4z"/><path d="M2.300 0.700L23.300 21.700" stroke="#fff" stroke-width="1.300" fill="none"/><path d="M0.800 1.700L22.300 23.200" stroke="currentColor" stroke-width="1.800" fill="none"/></svg>
<svg class="b" style="left:1194.07px;top:306.10px;color:#c4c4c4" width="14.25" height="14.25" viewBox="0 0 24 24"><path fill="currentColor" d="M12 2C6.48 2 2 6.48 2 12s4.480 10 10 10 10-4.480 10-10S17.520 2 12 2zm-1 17.930c-3.950-.490-7-3.850-7-7.930 0-.620.080-1.210.210-1.790L9 15v1c0 1.100.9 2 2 2v1.930zm6.900-2.540c-.260-.810-1-1.390-1.900-1.390h-1v-3c0-.550-.450-1-1-1H8v-2h2c.550 0 1-.450 1-1V7h2c1.100 0 2-.9 2-2v-.410c2.930 1.190 5 4.060 5 7.410 0 2.080-.8 3.970-2.100 5.390z"/></svg>
<svg class="b" style="left:1208.30px;top:306.10px;color:#42a5f5" width="14.25" height="14.25" viewBox="0 0 24 24"><path fill="currentColor" d="M12 11.550C9.640 9.350 6.480 8 3 8v11c3.480 0 6.640 1.350 9 3.550 2.360-2.190 5.520-3.550 9-3.550V8c-3.480 0-6.640 1.350-9 3.550zM12 8c1.660 0 3-1.340 3-3s-1.340-3-3-3-3 1.340-3 3 1.340 3 3 3z"/></svg>
<svg class="b" style="left:1222.53px;top:306.10px;color:#c4c4c4" width="14.25" height="14.25" viewBox="0 0 24 24"><path fill="currentColor" d="M17 3H7c-1.100 0-1.990.9-1.990 2L5 21l7-3 7 3V5c0-1.100-.9-2-2-2z"/></svg>
<svg class="b" style="left:1236.76px;top:306.10px;color:#c4c4c4" width="14.25" height="14.25" viewBox="0 0 24 24"><path fill="currentColor" d="M17 3H7c-1.100 0-1.990.9-1.990 2L5 21l7-3 7 3V5c0-1.100-.9-2-2-2zm0 15l-5-2.180L7 18V5h10v13z"/></svg>
<svg class="b" style="left:1250.99px;top:306.10px;color:#c4c4c4" width="14.25" height="14.25" viewBox="0 0 24 24"><path fill="currentColor" d="M12 1L3 5v6c0 5.550 3.840 10.740 9 12 5.160-1.260 9-6.450 9-12V5l-9-4zm-2 16l-4-4 1.410-1.410L10 14.170l6.590-6.590L18 9l-8 8z"/></svg>
<svg class="b" style="left:1265.22px;top:306.10px;color:#c4c4c4" width="14.25" height="14.25" viewBox="0 0 24 24"><path fill="currentColor" d="M12 1L3 5v6c0 5.550 3.840 10.740 9 12 5.160-1.260 9-6.450 9-12V5l-9-4zm0 10.990h7c-.530 4.120-3.280 7.790-7 8.940V12H5V6.300l7-3.110v8.800z"/></svg>
<svg class="b" style="left:1279.45px;top:306.10px;color:#c4c4c4" width="14.25" height="14.25" viewBox="0 0 24 24"><path fill="currentColor" d="M3 3.500h8V11H3zM3 13.500h8V21H3zM13 13.500h8V21h-8zM12.500 5H17V1.800l6 5.450-6 5.450V9.500h-4.500zM16 11h2v3h-2z"/></svg>
<svg class="b" style="left:1293.68px;top:306.10px;color:#c4c4c4" width="14.25" height="14.25" viewBox="0 0 24 24"><path fill="currentColor" d="M4 16c0 .880.390 1.670 1 2.220V20c0 .550.450 1 1 1h1c.550 0 1-.450 1-1v-1h8v1c0 .550.450 1 1 1h1c.550 0 1-.450 1-1v-1.780c.610-.550 1-1.340 1-2.220V6c0-3.500-3.580-4-8-4s-8 .5-8 4v10zm3.500 1c-.830 0-1.500-.670-1.500-1.500S6.670 14 7.500 14s1.500.670 1.500 1.500S8.330 17 7.500 17zm9 0c-.830 0-1.500-.670-1.500-1.500s.670-1.500 1.500-1.500 1.500.670 1.500 1.500-.670 1.500-1.500 1.500zm1.500-6H6V6h12v5z"/></svg>
<svg class="b" style="left:1307.91px;top:306.10px;color:#c4c4c4" width="14.25" height="14.25" viewBox="0 0 24 24"><path fill="currentColor" d="M20.500 11H19V7c0-1.100-.9-2-2-2h-4V3.500C13 2.120 11.880 1 10.500 1S8 2.120 8 3.500V5H4c-1.100 0-1.990.9-1.990 2v3.800H3.500c1.490 0 2.700 1.210 2.700 2.700s-1.210 2.700-2.700 2.700H2V20c0 1.100.9 2 2 2h3.800v-1.500c0-1.490 1.210-2.700 2.700-2.700 1.490 0 2.700 1.210 2.700 2.700V22H17c1.100 0 2-.9 2-2v-4h1.500c1.380 0 2.500-1.120 2.500-2.500S21.880 11 20.500 11z"/></svg>
<svg class="b" style="left:1322.14px;top:306.10px;color:#c4c4c4" width="14.25" height="14.25" viewBox="0 0 24 24"><path fill="currentColor" d="M12 2C6.480 2 2 6.480 2 12s4.480 10 10 10 10-4.480 10-10S17.520 2 12 2zm1.410 16.090V20h-2.670v-1.930c-1.710-.360-3.160-1.460-3.270-3.400h1.960c.100 1.050.820 1.870 2.650 1.870 1.960 0 2.400-.980 2.400-1.590 0-.830-.440-1.610-2.670-2.140-2.480-.6-4.180-1.620-4.180-3.670 0-1.720 1.390-2.840 3.110-3.210V4h2.670v1.950c1.860.450 2.790 1.860 2.850 3.390H14.300c-.050-1.110-.640-1.870-2.220-1.870-1.500 0-2.400.680-2.400 1.640 0 .840.650 1.390 2.670 1.910s4.180 1.390 4.180 3.910c-.010 1.830-1.380 2.830-3.120 3.160z"/></svg>
<svg class="b" style="left:1336.37px;top:306.10px;color:#c4c4c4" width="14.25" height="14.25" viewBox="0 0 24 24"><path fill="currentColor" d="M12 2c1.100 0 2 .9 2 2s-.9 2-2 2-2-.9-2-2 .9-2 2-2zM19 13v-2c-1.540.02-3.090-.75-4.070-1.830l-1.290-1.430c-.17-.19-.38-.34-.61-.45-.01 0-.01-.01-.02-.01H13c-.35-.2-.75-.3-1.190-.26C10.760 7.110 10 8.040 10 9.090V15c0 1.100.9 2 2 2h5v5h2v-5.500c0-1.100-.9-2-2-2h-3v-3.450c1.290 1.070 3.250 1.940 5 1.950zm-6.170 5c-.41 1.160-1.520 2-2.830 2-1.660 0-3-1.340-3-3 0-1.310.84-2.410 2-2.830V12.100c-2.280.46-4 2.480-4 4.900 0 2.760 2.240 5 5 5 2.420 0 4.440-1.720 4.900-4h-2.070z"/></svg>
<svg class="b" style="left:1350.60px;top:306.10px;color:#42a5f5" width="14.25" height="14.25" viewBox="0 0 24 24"><path fill="currentColor" d="M12 2C8.140 2 5 5.140 5 9c0 5.250 7 13 7 13s7-7.750 7-13c0-3.860-3.140-7-7-7zm0 2c1.100 0 2 .9 2 2 0 1.110-.9 2-2 2s-2-.89-2-2c0-1.100.9-2 2-2zm0 10c-1.670 0-3.140-.85-4-2.150.02-1.320 2.670-2.050 4-2.050s3.980.73 4 2.050c-.86 1.300-2.330 2.150-4 2.150z"/></svg>
<svg class="b" style="left:1364.83px;top:306.10px;color:#c4c4c4" width="14.25" height="14.25" viewBox="0 0 24 24"><path fill="currentColor" d="M19 3H5c-1.100 0-1.990.9-1.990 2L3 19c0 1.100.9 2 2 2h14c1.100 0 2-.9 2-2V5c0-1.100-.9-2-2-2zm-1 11h-4v4h-4v-4H6v-4h4V6h4v4h4v4z"/></svg>
<svg class="b" style="left:1379.06px;top:306.10px;color:#c4c4c4" width="14.25" height="14.25" viewBox="0 0 24 24"><path fill="currentColor" d="M12 2C6.480 2 2 6.480 2 12s4.480 10 10 10 10-4.480 10-10S17.520 2 12 2zm0 18c-4.420 0-8-3.580-8-8s3.580-8 8-8 8 3.580 8 8-3.580 8-8 8z"/></svg>
<svg class="b" style="left:1393.29px;top:306.10px;color:#c4c4c4" width="14.25" height="14.25" viewBox="0 0 24 24"><path fill="currentColor" d="M18 2H6c-1.100 0-2 .9-2 2v16c0 1.100.9 2 2 2h12c1.100 0 2-.9 2-2V4c0-1.100-.9-2-2-2zM6 4h5v8l-2.500-1.500L6 12V4z"/></svg>
<svg class="b" style="left:1407.52px;top:306.10px;color:#c4c4c4" width="14.25" height="14.25" viewBox="0 0 24 24"><path fill="currentColor" d="M19 3h-4.18C14.4 1.84 13.3 1 12 1c-1.3 0-2.4.84-2.82 2H5c-1.1 0-2 .9-2 2v14c0 1.1.9 2 2 2h14c1.1 0 2-.9 2-2V5c0-1.1-.9-2-2-2zm-7 0c.55 0 1 .45 1 1s-.45 1-1 1-1-.45-1-1 .45-1 1-1zm-2 14l-4-4 1.410-1.410L10 14.170l6.590-6.590L18 9l-8 8z"/></svg>
<svg class="b" style="left:1421.75px;top:306.10px;color:#c4c4c4" width="14.25" height="14.25" viewBox="0 0 24 24"><path fill="currentColor" d="M21 5v14h2V5h-2zm-4 14h2V5h-2v14zM14 5H2c-.55 0-1 .45-1 1v12c0 .55.45 1 1 1h12c.55 0 1-.45 1-1V6c0-.55-.45-1-1-1zM8 7.750c1.240 0 2.250 1.010 2.250 2.250S9.240 12.250 8 12.250 5.750 11.240 5.750 10 6.760 7.750 8 7.750zM12.500 17h-9v-.75c0-1.500 3-2.250 4.500-2.250s4.500.75 4.500 2.250V17z"/></svg>
<svg class="b" style="left:1435.98px;top:306.10px;color:#c4c4c4" width="14.25" height="14.25" viewBox="0 0 24 24"><path fill="currentColor" d="M14.400 6L14 4H5v17h2v-7h5.600l.4 2h7V6z"/></svg>
<div class="b" style="left:193.00px;top:332.00px;width:1284.00px;height:1.00px;background:#ececec;"></div>
<div class="b" style="left:205.20px;top:343.88px;width:12.00px;height:12.00px;border:1px solid #979797;border-radius:2px;box-sizing:border-box;background:#fff;"></div>
<span class="t" style="left:236.80px;top:344px;line-height:11px;font-size:10.4px;color:#606060;letter-spacing:-0.236px;">CHALEWSKA SHIRA</span>
<span class="t" style="left:847.30px;top:343px;line-height:12px;font-size:10.6px;color:#606060;letter-spacing:0.065px;">13291500184</span>
<span class="t" style="left:964.00px;top:343px;line-height:12px;font-size:10.6px;color:#606060;letter-spacing:-0.006px;">04.04.2019</span>
<svg class="b" style="left:1066.00px;top:341.10px;color:#c62828" width="14.25" height="14.25" viewBox="0 0 24 24"><path fill="currentColor" d="M15 3H6c-.83 0-1.54.5-1.84 1.22l-3.02 7.05c-.09.23-.14.47-.14.73v2c0 1.1.9 2 2 2h6.31l-.95 4.57-.03.32c0 .41.17.79.44 1.06L9.83 23l6.59-6.59c.36-.36.58-.86.58-1.41V5c0-1.1-.9-2-2-2zm4 0v10h4V3h-4z"/></svg>
<svg class="b" style="left:1080.23px;top:341.10px;color:#c4c4c4" width="14.25" height="14.25" viewBox="0 0 24 24"><path fill="currentColor" d="M19 3h-4.18C14.4 1.84 13.3 1 12 1c-1.3 0-2.4.84-2.82 2H5c-1.1 0-2 .9-2 2v14c0 1.1.9 2 2 2h14c1.1 0 2-.9 2-2V5c0-1.1-.9-2-2-2zm-6 15h-2v-2h2v2zm0-4h-2V8h2v6zm-1-9c-.55 0-1-.45-1-1s.45-1 1-1 1 .45 1 1-.45 1-1 1z"/></svg>
<svg class="b" style="left:1094.46px;top:341.10px;color:#c4c4c4" width="14.25" height="14.25" viewBox="0 0 24 24"><path fill="currentColor" d="M12 2C6.5 2 2 6.5 2 12s4.5 10 10 10 10-4.5 10-10S17.5 2 12 2zm4.2 14.2L11 13V7h1.5v5.2l4.5 2.7-.8 1.3z"/></svg>
<svg class="b" style="left:1108.69px;top:341.10px;color:#c4c4c4" width="14.25" height="14.25" viewBox="0 0 24 24"><path fill="currentColor" d="M19 3h-4.18C14.4 1.84 13.3 1 12 1c-1.3 0-2.4.84-2.82 2H5c-1.1 0-2 .9-2 2v14c0 1.1.9 2 2 2h14c1.1 0 2-.9 2-2V5c0-1.1-.9-2-2-2zm-7 0c.55 0 1 .45 1 1s-.45 1-1 1-1-.45-1-1 .45-1 1-1zm0 15l-5-5h3V9h4v4h3l-5 5z"/></svg>
<svg class="b" style="left:1122.92px;top:341.10px;color:#c62828" width="14.25" height="14.25" viewBox="0 0 24 24"><path fill="currentColor" d="M19 3h-4.18C14.4 1.84 13.3 1 12 1c-1.3 0-2.4.84-2.82 2H5c-1.1 0-2 .9-2 2v14c0 1.1.9 2 2 2h14c1.1 0 2-.9 2-2V5c0-1.1-.9-2-2-2zm-7 0c.55 0 1 .45 1 1s-.45 1-1 1-1-.45-1-1 .45-1 1-1zm4 12h-4v3l-5-5 5-5v3h4v4z"/></svg>
<svg class="b" style="left:1137.15px;top:341.10px;color:#c4c4c4" width="14.25" height="14.25" viewBox="0 0 24 24"><path fill="currentColor" d="M19 3h-4.18C14.4 1.84 13.3 1 12 1c-1.3 0-2.4.84-2.82 2H5c-1.1 0-2 .9-2 2v14c0 1.1.9 2 2 2h14c1.1 0 2-.9 2-2V5c0-1.1-.9-2-2-2zm-7 0c.55 0 1 .45 1 1s-.45 1-1 1-1-.45-1-1 .45-1 1-1zm0 4c1.66 0 3 1.34 3 3s-1.34 3-3 3-3-1.34-3-3 1.34-3 3-3zm6 12H6v-1.4c0-2 4-3.1 6-3.1s6 1.1 6 3.1V19z"/></svg>
<svg class="b" style="left:1151.38px;top:341.10px;color:#c4c4c4" width="14.25" height="14.25" viewBox="0 0 24 24"><path fill="currentColor" d="M19 3h-4.18C14.4 1.84 13.3 1 12 1c-1.3 0-2.4.84-2.82 2H5c-1.1 0-2 .9-2 2v14c0 1.1.9 2 2 2h14c1.1 0 2-.9 2-2V5c0-1.1-.9-2-2-2zm-7 0c.55 0 1 .45 1 1s-.45 1-1 1-1-.45-1-1 .45-1 1-1zm2 14H7v-2h7v2zm3-4H7v-2h10v2zm0-4H7V7h10v2z"/></svg>
<svg class="b" style="left:1165.61px;top:341.10px;color:#c4c4c4" width="14.25" height="14.25" viewBox="0 0 24 24"><path fill="currentColor" d="M12 6.5c1.38 0 2.5 1.12 2.5 2.5 0 .74-.33 1.39-.83 1.85l3.63 3.63c.98-1.86 1.7-3.8 1.7-5.48 0-3.87-3.13-7-7-7-1.98 0-3.76.83-5.04 2.15l3.19 3.19c.46-.52 1.11-.84 1.85-.84zm4.37 9.6l-4.63-4.63-.11-.11L3.27 3 2 4.27l3.18 3.18C5.07 7.95 5 8.47 5 9c0 5.250 7 13 7 13s1.670-1.850 3.380-4.350L18.730 21 20 19.730l-3.630-3.630z"/></svg>
<svg class="b" style="left:1179.84px;top:341.10px;color:#c62828" width="14.25" height="14.25" viewBox="0 0 24 24"><path fill="currentColor" fill-rule="evenodd" d="M2 2h20v20H2zM4.5 4.8h4v2.400h-4zM10 4.8h4v2.400h-4zM15.5 4.8h4v2.400h-4zM4.5 10.8h4v2.400h-4zM10 10.8h4v2.400h-4zM15.5 10.8h4v2.400h-4zM4.5 16.8h4v2.400h-4zM10 16.8h4v2.400h-4zM15.5 16.8h4v2.400h-4z"/><path d="M2.300 0.700L23.300 21.700" stroke="#fff" stroke-width="1.300" fill="none"/><path d="M0.800 1.700L22.300 23.200" stroke="currentColor" stroke-width="1.800" fill="none"/></svg>
<svg class="b" style="left:1194.07px;top:341.10px;color:#c4c4c4" width="14.25" height="14.25" viewBox="0 0 24 24"><path fill="currentColor" d="M12 2C6.48 2 2 6.48 2 12s4.480 10 10 10 10-4.480 10-10S17.520 2 12 2zm-1 17.930c-3.950-.490-7-3.850-7-7.930 0-.620.080-1.210.210-1.790L9 15v1c0 1.100.9 2 2 2v1.930zm6.900-2.540c-.260-.810-1-1.390-1.900-1.390h-1v-3c0-.550-.450-1-1-1H8v-2h2c.550 0 1-.450 1-1V7h2c1.100 0 2-.9 2-2v-.410c2.930 1.190 5 4.060 5 7.410 0 2.080-.8 3.970-2.100 5.390z"/></svg>
<svg class="b" style="left:1208.30px;top:341.10px;color:#42a5f5" width="14.25" height="14.25" viewBox="0 0 24 24"><path fill="currentColor" d="M12 11.550C9.640 9.350 6.480 8 3 8v11c3.480 0 6.640 1.350 9 3.550 2.360-2.190 5.520-3.550 9-3.550V8c-3.480 0-6.640 1.350-9 3.550zM12 8c1.660 0 3-1.340 3-3s-1.340-3-3-3-3 1.340-3 3 1.340 3 3 3z"/></svg>
<svg class="b" style="left:1222.53px;top:341.10px;color:#c4c4c4" width="14.25" height="14.25" viewBox="0 0 24 24"><path fill="currentColor" d="M17 3H7c-1.100 0-1.990.9-1.990 2L5 21l7-3 7 3V5c0-1.100-.9-2-2-2z"/></svg>
<svg class="b" style="left:1236.76px;top:341.10px;color:#c4c4c4" width="14.25" height="14.25" viewBox="0 0 24 24"><path fill="currentColor" d="M17 3H7c-1.100 0-1.990.9-1.990 2L5 21l7-3 7 3V5c0-1.100-.9-2-2-2zm0 15l-5-2.180L7 18V5h10v13z"/></svg>
<svg class="b" style="left:1250.99px;top:341.10px;color:#c4c4c4" width="14.25" height="14.25" viewBox="0 0 24 24"><path fill="currentColor" d="M12 1L3 5v6c0 5.550 3.840 10.740 9 12 5.160-1.260 9-6.450 9-12V5l-9-4zm-2 16l-4-4 1.410-1.410L10 14.170l6.590-6.590L18 9l-8 8z"/></svg>
<svg class="b" style="left:1265.22px;top:341.10px;color:#c4c4c4" width="14.25" height="14.25" viewBox="0 0 24 24"><path fill="currentColor" d="M12 1L3 5v6c0 5.550 3.840 10.740 9 12 5.160-1.260 9-6.450 9-12V5l-9-4zm0 10.990h7c-.530 4.120-3.280 7.790-7 8.940V12H5V6.300l7-3.110v8.800z"/></svg>
<svg class="b" style="left:1279.45px;top:341.10px;color:#c4c4c4" width="14.25" height="14.25" viewBox="0 0 24 24"><path fill="currentColor" d="M3 3.500h8V11H3zM3 13.500h8V21H3zM13 13.500h8V21h-8zM12.500 5H17V1.800l6 5.450-6 5.450V9.500h-4.500zM16 11h2v3h-2z"/></svg>
<svg class="b" style="left:1293.68px;top:341.10px;color:#c4c4c4" width="14.25" height="14.25" viewBox="0 0 24 24"><path fill="currentColor" d="M4 16c0 .880.390 1.670 1 2.220V20c0 .550.450 1 1 1h1c.550 0 1-.450 1-1v-1h8v1c0 .550.450 1 1 1h1c.550 0 1-.450 1-1v-1.780c.610-.550 1-1.340 1-2.220V6c0-3.500-3.580-4-8-4s-8 .5-8 4v10zm3.500 1c-.830 0-1.500-.670-1.500-1.500S6.670 14 7.500 14s1.500.670 1.500 1.500S8.330 17 7.500 17zm9 0c-.830 0-1.500-.670-1.500-1.500s.670-1.500 1.500-1.500 1.500.670 1.500 1.500-.670 1.500-1.500 1.500zm1.500-6H6V6h12v5z"/></svg>
<svg class="b" style="left:1307.91px;top:341.10px;color:#c4c4c4" width="14.25" height="14.25" viewBox="0 0 24 24"><path fill="currentColor" d="M20.500 11H19V7c0-1.100-.9-2-2-2h-4V3.500C13 2.120 11.880 1 10.500 1S8 2.120 8 3.500V5H4c-1.100 0-1.990.9-1.990 2v3.800H3.500c1.490 0 2.700 1.210 2.700 2.700s-1.210 2.700-2.700 2.700H2V20c0 1.100.9 2 2 2h3.800v-1.500c0-1.490 1.210-2.700 2.700-2.700 1.490 0 2.700 1.210 2.700 2.700V22H17c1.100 0 2-.9 2-2v-4h1.500c1.380 0 2.500-1.120 2.500-2.500S21.880 11 20.500 11z"/></svg>
<svg class="b" style="left:1322.14px;top:341.10px;color:#c4c4c4" width="14.25" height="14.25" viewBox="0 0 24 24"><path fill="currentColor" d="M12 2C6.480 2 2 6.480 2 12s4.480 10 10 10 10-4.480 10-10S17.520 2 12 2zm1.410 16.090V20h-2.670v-1.930c-1.710-.360-3.160-1.460-3.270-3.400h1.960c.100 1.050.820 1.870 2.650 1.870 1.960 0 2.400-.980 2.400-1.590 0-.830-.440-1.610-2.670-2.140-2.480-.6-4.180-1.620-4.180-3.670 0-1.720 1.390-2.840 3.110-3.210V4h2.670v1.950c1.860.450 2.790 1.860 2.850 3.390H14.300c-.050-1.110-.640-1.870-2.220-1.870-1.500 0-2.400.680-2.400 1.640 0 .840.650 1.390 2.670 1.910s4.180 1.390 4.180 3.910c-.010 1.830-1.380 2.830-3.120 3.160z"/></svg>
<svg class="b" style="left:1336.37px;top:341.10px;color:#42a5f5" width="14.25" height="14.25" viewBox="0 0 24 24"><path fill="currentColor" d="M12 2c1.100 0 2 .9 2 2s-.9 2-2 2-2-.9-2-2 .9-2 2-2zM19 13v-2c-1.540.02-3.090-.75-4.070-1.830l-1.290-1.430c-.17-.19-.38-.34-.61-.45-.01 0-.01-.01-.02-.01H13c-.35-.2-.75-.3-1.190-.26C10.760 7.110 10 8.040 10 9.090V15c0 1.100.9 2 2 2h5v5h2v-5.500c0-1.100-.9-2-2-2h-3v-3.450c1.290 1.070 3.250 1.940 5 1.950zm-6.170 5c-.41 1.160-1.520 2-2.830 2-1.660 0-3-1.340-3-3 0-1.310.84-2.410 2-2.830V12.100c-2.280.46-4 2.480-4 4.900 0 2.760 2.240 5 5 5 2.420 0 4.440-1.720 4.900-4h-2.070z"/></svg>
<svg class="b" style="left:1350.60px;top:341.10px;color:#42a5f5" width="14.25" height="14.25" viewBox="0 0 24 24"><path fill="currentColor" d="M12 2C8.140 2 5 5.140 5 9c0 5.250 7 13 7 13s7-7.750 7-13c0-3.860-3.140-7-7-7zm0 2c1.100 0 2 .9 2 2 0 1.110-.9 2-2 2s-2-.89-2-2c0-1.100.9-2 2-2zm0 10c-1.670 0-3.140-.85-4-2.150.02-1.320 2.670-2.050 4-2.050s3.980.73 4 2.050c-.86 1.300-2.330 2.150-4 2.150z"/></svg>
<svg class="b" style="left:1364.83px;top:341.10px;color:#c4c4c4" width="14.25" height="14.25" viewBox="0 0 24 24"><path fill="currentColor" d="M19 3H5c-1.100 0-1.990.9-1.990 2L3 19c0 1.100.9 2 2 2h14c1.100 0 2-.9 2-2V5c0-1.100-.9-2-2-2zm-1 11h-4v4h-4v-4H6v-4h4V6h4v4h4v4z"/></svg>
<svg class="b" style="left:1379.06px;top:341.10px;color:#c4c4c4" width="14.25" height="14.25" viewBox="0 0 24 24"><path fill="currentColor" d="M12 2C6.480 2 2 6.480 2 12s4.480 10 10 10 10-4.480 10-10S17.520 2 12 2zm0 18c-4.420 0-8-3.580-8-8s3.580-8 8-8 8 3.580 8 8-3.580 8-8 8z"/></svg>
<svg class="b" style="left:1393.29px;top:341.10px;color:#c4c4c4" width="14.25" height="14.25" viewBox="0 0 24 24"><path fill="currentColor" d="M18 2H6c-1.100 0-2 .9-2 2v16c0 1.100.9 2 2 2h12c1.100 0 2-.9 2-2V4c0-1.100-.9-2-2-2zM6 4h5v8l-2.500-1.500L6 12V4z"/></svg>
<svg class="b" style="left:1407.52px;top:341.10px;color:#c4c4c4" width="14.25" height="14.25" viewBox="0 0 24 24"><path fill="currentColor" d="M19 3h-4.18C14.4 1.84 13.3 1 12 1c-1.3 0-2.4.84-2.82 2H5c-1.1 0-2 .9-2 2v14c0 1.1.9 2 2 2h14c1.1 0 2-.9 2-2V5c0-1.1-.9-2-2-2zm-7 0c.55 0 1 .45 1 1s-.45 1-1 1-1-.45-1-1 .45-1 1-1zm-2 14l-4-4 1.410-1.410L10 14.170l6.590-6.590L18 9l-8 8z"/></svg>
<svg class="b" style="left:1421.75px;top:341.10px;color:#c4c4c4" width="14.25" height="14.25" viewBox="0 0 24 24"><path fill="currentColor" d="M21 5v14h2V5h-2zm-4 14h2V5h-2v14zM14 5H2c-.55 0-1 .45-1 1v12c0 .55.45 1 1 1h12c.55 0 1-.45 1-1V6c0-.55-.45-1-1-1zM8 7.750c1.240 0 2.250 1.010 2.250 2.250S9.240 12.250 8 12.250 5.750 11.240 5.750 10 6.760 7.750 8 7.750zM12.500 17h-9v-.75c0-1.500 3-2.250 4.500-2.250s4.500.75 4.500 2.250V17z"/></svg>
<svg class="b" style="left:1435.98px;top:341.10px;color:#c4c4c4" width="14.25" height="14.25" viewBox="0 0 24 24"><path fill="currentColor" d="M14.400 6L14 4H5v17h2v-7h5.600l.4 2h7V6z"/></svg>
<div class="b" style="left:193.00px;top:367.00px;width:1284.00px;height:1.00px;background:#ececec;"></div>
<div class="b" style="left:205.20px;top:378.91px;width:12.00px;height:12.00px;border:1px solid #979797;border-radius:2px;box-sizing:border-box;background:#fff;"></div>
<span class="t" style="left:236.80px;top:379px;line-height:11px;font-size:10.4px;color:#606060;letter-spacing:-0.297px;">CHARZEWSKI EMA</span>
<span class="t" style="left:847.30px;top:378px;line-height:12px;font-size:10.6px;color:#606060;letter-spacing:0.065px;">14222100246</span>
<span class="t" style="left:964.00px;top:378px;line-height:12px;font-size:10.6px;color:#606060;letter-spacing:-0.006px;">04.04.2019</span>
<svg class="b" style="left:1066.00px;top:376.10px;color:#c62828" width="14.25" height="14.25" viewBox="0 0 24 24"><path fill="currentColor" d="M15 3H6c-.83 0-1.54.5-1.84 1.22l-3.02 7.05c-.09.23-.14.47-.14.73v2c0 1.1.9 2 2 2h6.31l-.95 4.57-.03.32c0 .41.17.79.44 1.06L9.83 23l6.59-6.59c.36-.36.58-.86.58-1.41V5c0-1.1-.9-2-2-2zm4 0v10h4V3h-4z"/></svg>
<svg class="b" style="left:1080.23px;top:376.10px;color:#c4c4c4" width="14.25" height="14.25" viewBox="0 0 24 24"><path fill="currentColor" d="M19 3h-4.18C14.4 1.84 13.3 1 12 1c-1.3 0-2.4.84-2.82 2H5c-1.1 0-2 .9-2 2v14c0 1.1.9 2 2 2h14c1.1 0 2-.9 2-2V5c0-1.1-.9-2-2-2zm-6 15h-2v-2h2v2zm0-4h-2V8h2v6zm-1-9c-.55 0-1-.45-1-1s.45-1 1-1 1 .45 1 1-.45 1-1 1z"/></svg>
<svg class="b" style="left:1094.46px;top:376.10px;color:#c4c4c4" width="14.25" height="14.25" viewBox="0 0 24 24"><path fill="currentColor" d="M12 2C6.5 2 2 6.5 2 12s4.5 10 10 10 10-4.5 10-10S17.5 2 12 2zm4.2 14.2L11 13V7h1.5v5.2l4.5 2.7-.8 1.3z"/></svg>
<svg class="b" style="left:1108.69px;top:376.10px;color:#c4c4c4" width="14.25" height="14.25" viewBox="0 0 24 24"><path fill="currentColor" d="M19 3h-4.18C14.4 1.84 13.3 1 12 1c-1.3 0-2.4.84-2.82 2H5c-1.1 0-2 .9-2 2v14c0 1.1.9 2 2 2h14c1.1 0 2-.9 2-2V5c0-1.1-.9-2-2-2zm-7 0c.55 0 1 .45 1 1s-.45 1-1 1-1-.45-1-1 .45-1 1-1zm0 15l-5-5h3V9h4v4h3l-5 5z"/></svg>
<svg class="b" style="left:1122.92px;top:376.10px;color:#c62828" width="14.25" height="14.25" viewBox="0 0 24 24"><path fill="currentColor" d="M19 3h-4.18C14.4 1.84 13.3 1 12 1c-1.3 0-2.4.84-2.82 2H5c-1.1 0-2 .9-2 2v14c0 1.1.9 2 2 2h14c1.1 0 2-.9 2-2V5c0-1.1-.9-2-2-2zm-7 0c.55 0 1 .45 1 1s-.45 1-1 1-1-.45-1-1 .45-1 1-1zm4 12h-4v3l-5-5 5-5v3h4v4z"/></svg>
<svg class="b" style="left:1137.15px;top:376.10px;color:#c4c4c4" width="14.25" height="14.25" viewBox="0 0 24 24"><path fill="currentColor" d="M19 3h-4.18C14.4 1.84 13.3 1 12 1c-1.3 0-2.4.84-2.82 2H5c-1.1 0-2 .9-2 2v14c0 1.1.9 2 2 2h14c1.1 0 2-.9 2-2V5c0-1.1-.9-2-2-2zm-7 0c.55 0 1 .45 1 1s-.45 1-1 1-1-.45-1-1 .45-1 1-1zm0 4c1.66 0 3 1.34 3 3s-1.34 3-3 3-3-1.34-3-3 1.34-3 3-3zm6 12H6v-1.4c0-2 4-3.1 6-3.1s6 1.1 6 3.1V19z"/></svg>
<svg class="b" style="left:1151.38px;top:376.10px;color:#c4c4c4" width="14.25" height="14.25" viewBox="0 0 24 24"><path fill="currentColor" d="M19 3h-4.18C14.4 1.84 13.3 1 12 1c-1.3 0-2.4.84-2.82 2H5c-1.1 0-2 .9-2 2v14c0 1.1.9 2 2 2h14c1.1 0 2-.9 2-2V5c0-1.1-.9-2-2-2zm-7 0c.55 0 1 .45 1 1s-.45 1-1 1-1-.45-1-1 .45-1 1-1zm2 14H7v-2h7v2zm3-4H7v-2h10v2zm0-4H7V7h10v2z"/></svg>
<svg class="b" style="left:1165.61px;top:376.10px;color:#c4c4c4" width="14.25" height="14.25" viewBox="0 0 24 24"><path fill="currentColor" d="M12 6.5c1.38 0 2.5 1.12 2.5 2.5 0 .74-.33 1.39-.83 1.85l3.63 3.63c.98-1.86 1.7-3.8 1.7-5.48 0-3.87-3.13-7-7-7-1.98 0-3.76.83-5.04 2.15l3.19 3.19c.46-.52 1.11-.84 1.85-.84zm4.37 9.6l-4.63-4.63-.11-.11L3.27 3 2 4.27l3.18 3.18C5.07 7.95 5 8.47 5 9c0 5.250 7 13 7 13s1.670-1.850 3.380-4.350L18.730 21 20 19.730l-3.630-3.630z"/></svg>
<svg class="b" style="left:1179.84px;top:376.10px;color:#c62828" width="14.25" height="14.25" viewBox="0 0 24 24"><path fill="currentColor" fill-rule="evenodd" d="M2 2h20v20H2zM4.5 4.8h4v2.400h-4zM10 4.8h4v2.400h-4zM15.5 4.8h4v2.400h-4zM4.5 10.8h4v2.400h-4zM10 10.8h4v2.400h-4zM15.5 10.8h4v2.400h-4zM4.5 16.8h4v2.400h-4zM10 16.8h4v2.400h-4zM15.5 16.8h4v2.400h-4z"/><path d="M2.300 0.700L23.300 21.700" stroke="#fff" stroke-width="1.300" fill="none"/><path d="M0.800 1.700L22.300 23.200" stroke="currentColor" stroke-width="1.800" fill="none"/></svg>
<svg class="b" style="left:1194.07px;top:376.10px;color:#c4c4c4" width="14.25" height="14.25" viewBox="0 0 24 24"><path fill="currentColor" d="M12 2C6.48 2 2 6.48 2 12s4.480 10 10 10 10-4.480 10-10S17.520 2 12 2zm-1 17.930c-3.950-.490-7-3.850-7-7.930 0-.620.080-1.210.210-1.790L9 15v1c0 1.100.9 2 2 2v1.930zm6.900-2.540c-.260-.810-1-1.390-1.900-1.390h-1v-3c0-.550-.450-1-1-1H8v-2h2c.550 0 1-.450 1-1V7h2c1.100 0 2-.9 2-2v-.410c2.930 1.190 5 4.060 5 7.410 0 2.080-.8 3.970-2.100 5.390z"/></svg>
<svg class="b" style="left:1208.30px;top:376.10px;color:#42a5f5" width="14.25" height="14.25" viewBox="0 0 24 24"><path fill="currentColor" d="M12 11.550C9.640 9.350 6.480 8 3 8v11c3.480 0 6.640 1.350 9 3.550 2.360-2.190 5.520-3.550 9-3.550V8c-3.480 0-6.640 1.350-9 3.550zM12 8c1.660 0 3-1.340 3-3s-1.340-3-3-3-3 1.340-3 3 1.340 3 3 3z"/></svg>
<svg class="b" style="left:1222.53px;top:376.10px;color:#c4c4c4" width="14.25" height="14.25" viewBox="0 0 24 24"><path fill="currentColor" d="M17 3H7c-1.100 0-1.990.9-1.990 2L5 21l7-3 7 3V5c0-1.100-.9-2-2-2z"/></svg>
<svg class="b" style="left:1236.76px;top:376.10px;color:#c4c4c4" width="14.25" height="14.25" viewBox="0 0 24 24"><path fill="currentColor" d="M17 3H7c-1.100 0-1.990.9-1.990 2L5 21l7-3 7 3V5c0-1.100-.9-2-2-2zm0 15l-5-2.180L7 18V5h10v13z"/></svg>
<svg class="b" style="left:1250.99px;top:376.10px;color:#c4c4c4" width="14.25" height="14.25" viewBox="0 0 24 24"><path fill="currentColor" d="M12 1L3 5v6c0 5.550 3.840 10.740 9 12 5.160-1.260 9-6.450 9-12V5l-9-4zm-2 16l-4-4 1.410-1.410L10 14.170l6.590-6.590L18 9l-8 8z"/></svg>
<svg class="b" style="left:1265.22px;top:376.10px;color:#c4c4c4" width="14.25" height="14.25" viewBox="0 0 24 24"><path fill="currentColor" d="M12 1L3 5v6c0 5.550 3.840 10.740 9 12 5.160-1.260 9-6.450 9-12V5l-9-4zm0 10.990h7c-.530 4.120-3.280 7.790-7 8.940V12H5V6.300l7-3.110v8.800z"/></svg>
<svg class="b" style="left:1279.45px;top:376.10px;color:#42a5f5" width="14.25" height="14.25" viewBox="0 0 24 24"><path fill="currentColor" d="M3 3.500h8V11H3zM3 13.500h8V21H3zM13 13.500h8V21h-8zM12.500 5H17V1.800l6 5.450-6 5.450V9.500h-4.500zM16 11h2v3h-2z"/></svg>
<svg class="b" style="left:1293.68px;top:376.10px;color:#42a5f5" width="14.25" height="14.25" viewBox="0 0 24 24"><path fill="currentColor" d="M4 16c0 .880.390 1.670 1 2.220V20c0 .550.450 1 1 1h1c.550 0 1-.450 1-1v-1h8v1c0 .550.450 1 1 1h1c.550 0 1-.450 1-1v-1.780c.610-.550 1-1.340 1-2.220V6c0-3.500-3.580-4-8-4s-8 .5-8 4v10zm3.500 1c-.830 0-1.500-.670-1.500-1.500S6.670 14 7.500 14s1.500.670 1.500 1.500S8.330 17 7.500 17zm9 0c-.830 0-1.500-.670-1.500-1.500s.670-1.500 1.500-1.500 1.500.670 1.500 1.500-.670 1.500-1.500 1.500zm1.500-6H6V6h12v5z"/></svg>
<svg class="b" style="left:1307.91px;top:376.10px;color:#c4c4c4" width="14.25" height="14.25" viewBox="0 0 24 24"><path fill="currentColor" d="M20.500 11H19V7c0-1.100-.9-2-2-2h-4V3.500C13 2.120 11.880 1 10.500 1S8 2.120 8 3.500V5H4c-1.100 0-1.990.9-1.990 2v3.800H3.500c1.490 0 2.700 1.210 2.700 2.700s-1.210 2.700-2.700 2.700H2V20c0 1.100.9 2 2 2h3.800v-1.500c0-1.490 1.210-2.700 2.700-2.700 1.490 0 2.700 1.210 2.700 2.700V22H17c1.100 0 2-.9 2-2v-4h1.500c1.380 0 2.500-1.120 2.500-2.500S21.880 11 20.500 11z"/></svg>
<svg class="b" style="left:1322.14px;top:376.10px;color:#c4c4c4" width="14.25" height="14.25" viewBox="0 0 24 24"><path fill="currentColor" d="M12 2C6.480 2 2 6.480 2 12s4.480 10 10 10 10-4.480 10-10S17.520 2 12 2zm1.410 16.090V20h-2.670v-1.930c-1.710-.360-3.160-1.460-3.270-3.400h1.960c.100 1.050.820 1.870 2.650 1.870 1.960 0 2.400-.980 2.400-1.590 0-.830-.440-1.610-2.670-2.140-2.480-.6-4.180-1.620-4.180-3.670 0-1.720 1.390-2.840 3.110-3.210V4h2.670v1.950c1.860.450 2.790 1.860 2.850 3.390H14.300c-.050-1.110-.640-1.870-2.220-1.870-1.500 0-2.400.680-2.400 1.640 0 .840.650 1.390 2.670 1.910s4.180 1.390 4.180 3.910c-.010 1.830-1.380 2.830-3.120 3.160z"/></svg>
<svg class="b" style="left:1336.37px;top:376.10px;color:#42a5f5" width="14.25" height="14.25" viewBox="0 0 24 24"><path fill="currentColor" d="M12 2c1.100 0 2 .9 2 2s-.9 2-2 2-2-.9-2-2 .9-2 2-2zM19 13v-2c-1.540.02-3.090-.75-4.070-1.830l-1.290-1.430c-.17-.19-.38-.34-.61-.45-.01 0-.01-.01-.02-.01H13c-.35-.2-.75-.3-1.190-.26C10.760 7.110 10 8.040 10 9.090V15c0 1.100.9 2 2 2h5v5h2v-5.500c0-1.100-.9-2-2-2h-3v-3.450c1.290 1.070 3.250 1.940 5 1.950zm-6.170 5c-.41 1.160-1.520 2-2.830 2-1.660 0-3-1.340-3-3 0-1.310.84-2.410 2-2.830V12.100c-2.280.46-4 2.480-4 4.900 0 2.760 2.240 5 5 5 2.420 0 4.440-1.720 4.900-4h-2.070z"/></svg>
<svg class="b" style="left:1350.60px;top:376.10px;color:#42a5f5" width="14.25" height="14.25" viewBox="0 0 24 24"><path fill="currentColor" d="M12 2C8.140 2 5 5.140 5 9c0 5.250 7 13 7 13s7-7.750 7-13c0-3.860-3.140-7-7-7zm0 2c1.100 0 2 .9 2 2 0 1.110-.9 2-2 2s-2-.89-2-2c0-1.100.9-2 2-2zm0 10c-1.670 0-3.140-.85-4-2.150.02-1.320 2.670-2.050 4-2.050s3.980.73 4 2.050c-.86 1.300-2.330 2.150-4 2.150z"/></svg>
<svg class="b" style="left:1364.83px;top:376.10px;color:#c4c4c4" width="14.25" height="14.25" viewBox="0 0 24 24"><path fill="currentColor" d="M19 3H5c-1.100 0-1.990.9-1.990 2L3 19c0 1.100.9 2 2 2h14c1.100 0 2-.9 2-2V5c0-1.100-.9-2-2-2zm-1 11h-4v4h-4v-4H6v-4h4V6h4v4h4v4z"/></svg>
<svg class="b" style="left:1379.06px;top:376.10px;color:#c4c4c4" width="14.25" height="14.25" viewBox="0 0 24 24"><path fill="currentColor" d="M12 2C6.480 2 2 6.480 2 12s4.480 10 10 10 10-4.480 10-10S17.520 2 12 2zm0 18c-4.420 0-8-3.580-8-8s3.580-8 8-8 8 3.580 8 8-3.580 8-8 8z"/></svg>
<svg class="b" style="left:1393.29px;top:376.10px;color:#c4c4c4" width="14.25" height="14.25" viewBox="0 0 24 24"><path fill="currentColor" d="M18 2H6c-1.100 0-2 .9-2 2v16c0 1.100.9 2 2 2h12c1.100 0 2-.9 2-2V4c0-1.100-.9-2-2-2zM6 4h5v8l-2.500-1.500L6 12V4z"/></svg>
<svg class="b" style="left:1407.52px;top:376.10px;color:#c4c4c4" width="14.25" height="14.25" viewBox="0 0 24 24"><path fill="currentColor" d="M19 3h-4.18C14.4 1.84 13.3 1 12 1c-1.3 0-2.4.84-2.82 2H5c-1.1 0-2 .9-2 2v14c0 1.1.9 2 2 2h14c1.1 0 2-.9 2-2V5c0-1.1-.9-2-2-2zm-7 0c.55 0 1 .45 1 1s-.45 1-1 1-1-.45-1-1 .45-1 1-1zm-2 14l-4-4 1.410-1.410L10 14.170l6.590-6.590L18 9l-8 8z"/></svg>
<svg class="b" style="left:1421.75px;top:376.10px;color:#c4c4c4" width="14.25" height="14.25" viewBox="0 0 24 24"><path fill="currentColor" d="M21 5v14h2V5h-2zm-4 14h2V5h-2v14zM14 5H2c-.55 0-1 .45-1 1v12c0 .55.45 1 1 1h12c.55 0 1-.45 1-1V6c0-.55-.45-1-1-1zM8 7.750c1.240 0 2.250 1.010 2.250 2.250S9.240 12.250 8 12.250 5.750 11.240 5.750 10 6.760 7.750 8 7.750zM12.500 17h-9v-.75c0-1.500 3-2.250 4.500-2.250s4.500.75 4.500 2.250V17z"/></svg>
<svg class="b" style="left:1435.98px;top:376.10px;color:#c4c4c4" width="14.25" height="14.25" viewBox="0 0 24 24"><path fill="currentColor" d="M14.400 6L14 4H5v17h2v-7h5.600l.4 2h7V6z"/></svg>
<div class="b" style="left:193.00px;top:402.00px;width:1284.00px;height:1.00px;background:#ececec;"></div>
<div class="b" style="left:205.20px;top:413.94px;width:12.00px;height:12.00px;border:1px solid #979797;border-radius:2px;box-sizing:border-box;background:#fff;"></div>
<span class="t" style="left:236.80px;top:414px;line-height:11px;font-size:10.4px;color:#606060;letter-spacing:-0.255px;">CHASIKOWSKI LILLY</span>
<span class="t" style="left:847.30px;top:413px;line-height:12px;font-size:10.6px;color:#606060;letter-spacing:0.065px;">14231400256</span>
<span class="t" style="left:964.00px;top:413px;line-height:12px;font-size:10.6px;color:#606060;letter-spacing:-0.006px;">04.04.2019</span>
<svg class="b" style="left:1066.00px;top:411.10px;color:#c62828" width="14.25" height="14.25" viewBox="0 0 24 24"><path fill="currentColor" d="M15 3H6c-.83 0-1.54.5-1.84 1.22l-3.02 7.05c-.09.23-.14.47-.14.73v2c0 1.1.9 2 2 2h6.31l-.95 4.57-.03.32c0 .41.17.79.44 1.06L9.83 23l6.59-6.59c.36-.36.58-.86.58-1.41V5c0-1.1-.9-2-2-2zm4 0v10h4V3h-4z"/></svg>
<svg class="b" style="left:1080.23px;top:411.10px;color:#c4c4c4" width="14.25" height="14.25" viewBox="0 0 24 24"><path fill="currentColor" d="M19 3h-4.18C14.4 1.84 13.3 1 12 1c-1.3 0-2.4.84-2.82 2H5c-1.1 0-2 .9-2 2v14c0 1.1.9 2 2 2h14c1.1 0 2-.9 2-2V5c0-1.1-.9-2-2-2zm-6 15h-2v-2h2v2zm0-4h-2V8h2v6zm-1-9c-.55 0-1-.45-1-1s.45-1 1-1 1 .45 1 1-.45 1-1 1z"/></svg>
<svg class="b" style="left:1094.46px;top:411.10px;color:#c4c4c4" width="14.25" height="14.25" viewBox="0 0 24 24"><path fill="currentColor" d="M12 2C6.5 2 2 6.5 2 12s4.5 10 10 10 10-4.5 10-10S17.5 2 12 2zm4.2 14.2L11 13V7h1.5v5.2l4.5 2.7-.8 1.3z"/></svg>
<svg class="b" style="left:1108.69px;top:411.10px;color:#c4c4c4" width="14.25" height="14.25" viewBox="0 0 24 24"><path fill="currentColor" d="M19 3h-4.18C14.4 1.84 13.3 1 12 1c-1.3 0-2.4.84-2.82 2H5c-1.1 0-2 .9-2 2v14c0 1.1.9 2 2 2h14c1.1 0 2-.9 2-2V5c0-1.1-.9-2-2-2zm-7 0c.55 0 1 .45 1 1s-.45 1-1 1-1-.45-1-1 .45-1 1-1zm0 15l-5-5h3V9h4v4h3l-5 5z"/></svg>
<svg class="b" style="left:1122.92px;top:411.10px;color:#c4c4c4" width="14.25" height="14.25" viewBox="0 0 24 24"><path fill="currentColor" d="M19 3h-4.18C14.4 1.84 13.3 1 12 1c-1.3 0-2.4.84-2.82 2H5c-1.1 0-2 .9-2 2v14c0 1.1.9 2 2 2h14c1.1 0 2-.9 2-2V5c0-1.1-.9-2-2-2zm-7 0c.55 0 1 .45 1 1s-.45 1-1 1-1-.45-1-1 .45-1 1-1zm4 12h-4v3l-5-5 5-5v3h4v4z"/></svg>
<svg class="b" style="left:1137.15px;top:411.10px;color:#c4c4c4" width="14.25" height="14.25" viewBox="0 0 24 24"><path fill="currentColor" d="M19 3h-4.18C14.4 1.84 13.3 1 12 1c-1.3 0-2.4.84-2.82 2H5c-1.1 0-2 .9-2 2v14c0 1.1.9 2 2 2h14c1.1 0 2-.9 2-2V5c0-1.1-.9-2-2-2zm-7 0c.55 0 1 .45 1 1s-.45 1-1 1-1-.45-1-1 .45-1 1-1zm0 4c1.66 0 3 1.34 3 3s-1.34 3-3 3-3-1.34-3-3 1.34-3 3-3zm6 12H6v-1.4c0-2 4-3.1 6-3.1s6 1.1 6 3.1V19z"/></svg>
<svg class="b" style="left:1151.38px;top:411.10px;color:#c4c4c4" width="14.25" height="14.25" viewBox="0 0 24 24"><path fill="currentColor" d="M19 3h-4.18C14.4 1.84 13.3 1 12 1c-1.3 0-2.4.84-2.82 2H5c-1.1 0-2 .9-2 2v14c0 1.1.9 2 2 2h14c1.1 0 2-.9 2-2V5c0-1.1-.9-2-2-2zm-7 0c.55 0 1 .45 1 1s-.45 1-1 1-1-.45-1-1 .45-1 1-1zm2 14H7v-2h7v2zm3-4H7v-2h10v2zm0-4H7V7h10v2z"/></svg>
<svg class="b" style="left:1165.61px;top:411.10px;color:#c4c4c4" width="14.25" height="14.25" viewBox="0 0 24 24"><path fill="currentColor" d="M12 6.5c1.38 0 2.5 1.12 2.5 2.5 0 .74-.33 1.39-.83 1.85l3.63 3.63c.98-1.86 1.7-3.8 1.7-5.48 0-3.87-3.13-7-7-7-1.98 0-3.76.83-5.04 2.15l3.19 3.19c.46-.52 1.11-.84 1.85-.84zm4.37 9.6l-4.63-4.63-.11-.11L3.27 3 2 4.27l3.18 3.18C5.07 7.95 5 8.47 5 9c0 5.250 7 13 7 13s1.670-1.850 3.380-4.350L18.730 21 20 19.730l-3.630-3.630z"/></svg>
<svg class="b" style="left:1179.84px;top:411.10px;color:#c4c4c4" width="14.25" height="14.25" viewBox="0 0 24 24"><path fill="currentColor" fill-rule="evenodd" d="M2 2h20v20H2zM4.5 4.8h4v2.400h-4zM10 4.8h4v2.400h-4zM15.5 4.8h4v2.400h-4zM4.5 10.8h4v2.400h-4zM10 10.8h4v2.400h-4zM15.5 10.8h4v2.400h-4zM4.5 16.8h4v2.400h-4zM10 16.8h4v2.400h-4zM15.5 16.8h4v2.400h-4z"/><path d="M2.300 0.700L23.300 21.700" stroke="#fff" stroke-width="1.300" fill="none"/><path d="M0.800 1.700L22.300 23.200" stroke="currentColor" stroke-width="1.800" fill="none"/></svg>
<svg class="b" style="left:1194.07px;top:411.10px;color:#c4c4c4" width="14.25" height="14.25" viewBox="0 0 24 24"><path fill="currentColor" d="M12 2C6.48 2 2 6.48 2 12s4.480 10 10 10 10-4.480 10-10S17.520 2 12 2zm-1 17.930c-3.950-.490-7-3.850-7-7.930 0-.620.080-1.210.210-1.790L9 15v1c0 1.100.9 2 2 2v1.930zm6.900-2.540c-.260-.810-1-1.390-1.900-1.390h-1v-3c0-.550-.450-1-1-1H8v-2h2c.550 0 1-.450 1-1V7h2c1.100 0 2-.9 2-2v-.410c2.930 1.190 5 4.060 5 7.410 0 2.080-.8 3.970-2.100 5.390z"/></svg>
<svg class="b" style="left:1208.30px;top:411.10px;color:#42a5f5" width="14.25" height="14.25" viewBox="0 0 24 24"><path fill="currentColor" d="M12 11.550C9.640 9.350 6.480 8 3 8v11c3.480 0 6.640 1.350 9 3.550 2.360-2.190 5.520-3.550 9-3.550V8c-3.480 0-6.640 1.350-9 3.550zM12 8c1.660 0 3-1.340 3-3s-1.340-3-3-3-3 1.340-3 3 1.340 3 3 3z"/></svg>
<svg class="b" style="left:1222.53px;top:411.10px;color:#c4c4c4" width="14.25" height="14.25" viewBox="0 0 24 24"><path fill="currentColor" d="M17 3H7c-1.100 0-1.990.9-1.990 2L5 21l7-3 7 3V5c0-1.100-.9-2-2-2z"/></svg>
<svg class="b" style="left:1236.76px;top:411.10px;color:#c4c4c4" width="14.25" height="14.25" viewBox="0 0 24 24"><path fill="currentColor" d="M17 3H7c-1.100 0-1.990.9-1.990 2L5 21l7-3 7 3V5c0-1.100-.9-2-2-2zm0 15l-5-2.180L7 18V5h10v13z"/></svg>
<svg class="b" style="left:1250.99px;top:411.10px;color:#c4c4c4" width="14.25" height="14.25" viewBox="0 0 24 24"><path fill="currentColor" d="M12 1L3 5v6c0 5.550 3.840 10.740 9 12 5.160-1.260 9-6.450 9-12V5l-9-4zm-2 16l-4-4 1.410-1.410L10 14.170l6.590-6.590L18 9l-8 8z"/></svg>
<svg class="b" style="left:1265.22px;top:411.10px;color:#c4c4c4" width="14.25" height="14.25" viewBox="0 0 24 24"><path fill="currentColor" d="M12 1L3 5v6c0 5.550 3.840 10.740 9 12 5.160-1.260 9-6.450 9-12V5l-9-4zm0 10.990h7c-.530 4.120-3.280 7.790-7 8.940V12H5V6.300l7-3.110v8.800z"/></svg>
<svg class="b" style="left:1279.45px;top:411.10px;color:#c4c4c4" width="14.25" height="14.25" viewBox="0 0 24 24"><path fill="currentColor" d="M3 3.500h8V11H3zM3 13.500h8V21H3zM13 13.500h8V21h-8zM12.500 5H17V1.800l6 5.450-6 5.450V9.500h-4.500zM16 11h2v3h-2z"/></svg>
<svg class="b" style="left:1293.68px;top:411.10px;color:#c4c4c4" width="14.25" height="14.25" viewBox="0 0 24 24"><path fill="currentColor" d="M4 16c0 .880.390 1.670 1 2.220V20c0 .550.450 1 1 1h1c.550 0 1-.450 1-1v-1h8v1c0 .550.450 1 1 1h1c.550 0 1-.450 1-1v-1.780c.610-.550 1-1.340 1-2.220V6c0-3.500-3.580-4-8-4s-8 .5-8 4v10zm3.500 1c-.830 0-1.500-.670-1.500-1.500S6.670 14 7.500 14s1.500.670 1.500 1.500S8.330 17 7.500 17zm9 0c-.830 0-1.500-.670-1.500-1.500s.670-1.500 1.500-1.500 1.500.670 1.500 1.500-.670 1.500-1.500 1.500zm1.500-6H6V6h12v5z"/></svg>
<svg class="b" style="left:1307.91px;top:411.10px;color:#c4c4c4" width="14.25" height="14.25" viewBox="0 0 24 24"><path fill="currentColor" d="M20.500 11H19V7c0-1.100-.9-2-2-2h-4V3.500C13 2.120 11.880 1 10.500 1S8 2.120 8 3.500V5H4c-1.100 0-1.990.9-1.990 2v3.800H3.500c1.490 0 2.700 1.210 2.700 2.700s-1.210 2.700-2.700 2.700H2V20c0 1.100.9 2 2 2h3.800v-1.500c0-1.490 1.210-2.700 2.700-2.700 1.490 0 2.700 1.210 2.700 2.700V22H17c1.100 0 2-.9 2-2v-4h1.500c1.380 0 2.500-1.120 2.500-2.500S21.880 11 20.500 11z"/></svg>
<svg class="b" style="left:1322.14px;top:411.10px;color:#c4c4c4" width="14.25" height="14.25" viewBox="0 0 24 24"><path fill="currentColor" d="M12 2C6.480 2 2 6.480 2 12s4.480 10 10 10 10-4.480 10-10S17.520 2 12 2zm1.410 16.090V20h-2.670v-1.930c-1.710-.360-3.160-1.460-3.270-3.400h1.960c.100 1.050.820 1.870 2.650 1.870 1.960 0 2.400-.980 2.400-1.590 0-.830-.440-1.610-2.670-2.140-2.480-.6-4.180-1.620-4.180-3.670 0-1.720 1.390-2.840 3.110-3.210V4h2.670v1.950c1.860.450 2.790 1.860 2.850 3.390H14.300c-.050-1.110-.640-1.870-2.220-1.870-1.500 0-2.400.680-2.400 1.640 0 .840.650 1.390 2.670 1.910s4.180 1.390 4.180 3.910c-.010 1.830-1.380 2.830-3.120 3.160z"/></svg>
<svg class="b" style="left:1336.37px;top:411.10px;color:#c4c4c4" width="14.25" height="14.25" viewBox="0 0 24 24"><path fill="currentColor" d="M12 2c1.100 0 2 .9 2 2s-.9 2-2 2-2-.9-2-2 .9-2 2-2zM19 13v-2c-1.540.02-3.090-.75-4.070-1.830l-1.290-1.430c-.17-.19-.38-.34-.61-.45-.01 0-.01-.01-.02-.01H13c-.35-.2-.75-.3-1.190-.26C10.760 7.110 10 8.040 10 9.090V15c0 1.100.9 2 2 2h5v5h2v-5.500c0-1.100-.9-2-2-2h-3v-3.450c1.290 1.070 3.250 1.940 5 1.950zm-6.170 5c-.41 1.160-1.520 2-2.830 2-1.660 0-3-1.340-3-3 0-1.310.84-2.410 2-2.830V12.100c-2.280.46-4 2.480-4 4.900 0 2.760 2.240 5 5 5 2.420 0 4.440-1.720 4.900-4h-2.070z"/></svg>
<svg class="b" style="left:1350.60px;top:411.10px;color:#c4c4c4" width="14.25" height="14.25" viewBox="0 0 24 24"><path fill="currentColor" d="M12 2C8.140 2 5 5.140 5 9c0 5.250 7 13 7 13s7-7.750 7-13c0-3.860-3.140-7-7-7zm0 2c1.100 0 2 .9 2 2 0 1.110-.9 2-2 2s-2-.89-2-2c0-1.100.9-2 2-2zm0 10c-1.670 0-3.140-.85-4-2.150.02-1.320 2.670-2.050 4-2.050s3.980.73 4 2.050c-.86 1.300-2.330 2.150-4 2.150z"/></svg>
<svg class="b" style="left:1364.83px;top:411.10px;color:#c4c4c4" width="14.25" height="14.25" viewBox="0 0 24 24"><path fill="currentColor" d="M19 3H5c-1.100 0-1.990.9-1.990 2L3 19c0 1.100.9 2 2 2h14c1.100 0 2-.9 2-2V5c0-1.100-.9-2-2-2zm-1 11h-4v4h-4v-4H6v-4h4V6h4v4h4v4z"/></svg>
<svg class="b" style="left:1379.06px;top:411.10px;color:#c4c4c4" width="14.25" height="14.25" viewBox="0 0 24 24"><path fill="currentColor" d="M12 2C6.480 2 2 6.480 2 12s4.480 10 10 10 10-4.480 10-10S17.520 2 12 2zm0 18c-4.420 0-8-3.580-8-8s3.580-8 8-8 8 3.580 8 8-3.580 8-8 8z"/></svg>
<svg class="b" style="left:1393.29px;top:411.10px;color:#c4c4c4" width="14.25" height="14.25" viewBox="0 0 24 24"><path fill="currentColor" d="M18 2H6c-1.100 0-2 .9-2 2v16c0 1.100.9 2 2 2h12c1.100 0 2-.9 2-2V4c0-1.100-.9-2-2-2zM6 4h5v8l-2.500-1.500L6 12V4z"/></svg>
<svg class="b" style="left:1407.52px;top:411.10px;color:#c4c4c4" width="14.25" height="14.25" viewBox="0 0 24 24"><path fill="currentColor" d="M19 3h-4.18C14.4 1.84 13.3 1 12 1c-1.3 0-2.4.84-2.82 2H5c-1.1 0-2 .9-2 2v14c0 1.1.9 2 2 2h14c1.1 0 2-.9 2-2V5c0-1.1-.9-2-2-2zm-7 0c.55 0 1 .45 1 1s-.45 1-1 1-1-.45-1-1 .45-1 1-1zm-2 14l-4-4 1.410-1.410L10 14.170l6.590-6.590L18 9l-8 8z"/></svg>
<svg class="b" style="left:1421.75px;top:411.10px;color:#c4c4c4" width="14.25" height="14.25" viewBox="0 0 24 24"><path fill="currentColor" d="M21 5v14h2V5h-2zm-4 14h2V5h-2v14zM14 5H2c-.55 0-1 .45-1 1v12c0 .55.45 1 1 1h12c.55 0 1-.45 1-1V6c0-.55-.45-1-1-1zM8 7.750c1.240 0 2.250 1.010 2.250 2.250S9.240 12.250 8 12.250 5.750 11.240 5.750 10 6.760 7.750 8 7.750zM12.500 17h-9v-.75c0-1.500 3-2.250 4.500-2.250s4.500.75 4.500 2.250V17z"/></svg>
<svg class="b" style="left:1435.98px;top:411.10px;color:#c4c4c4" width="14.25" height="14.25" viewBox="0 0 24 24"><path fill="currentColor" d="M14.400 6L14 4H5v17h2v-7h5.600l.4 2h7V6z"/></svg>
<div class="b" style="left:193.00px;top:437.00px;width:1284.00px;height:1.00px;background:#ececec;"></div>
<div class="b" style="left:205.20px;top:448.97px;width:12.00px;height:12.00px;border:1px solid #979797;border-radius:2px;box-sizing:border-box;background:#fff;"></div>
<span class="t" style="left:236.80px;top:449px;line-height:11px;font-size:10.4px;color:#606060;letter-spacing:-0.182px;">CHAZBIJEWICZ DARIYA</span>
<span class="t" style="left:847.30px;top:448px;line-height:12px;font-size:10.6px;color:#606060;letter-spacing:0.065px;">14261300047</span>
<span class="t" style="left:964.00px;top:448px;line-height:12px;font-size:10.6px;color:#606060;letter-spacing:-0.006px;">04.04.2019</span>
<svg class="b" style="left:1066.00px;top:446.10px;color:#c4c4c4" width="14.25" height="14.25" viewBox="0 0 24 24"><path fill="currentColor" d="M15 3H6c-.83 0-1.54.5-1.84 1.22l-3.02 7.05c-.09.23-.14.47-.14.73v2c0 1.1.9 2 2 2h6.31l-.95 4.57-.03.32c0 .41.17.79.44 1.06L9.83 23l6.59-6.59c.36-.36.58-.86.58-1.41V5c0-1.1-.9-2-2-2zm4 0v10h4V3h-4z"/></svg>
<svg class="b" style="left:1080.23px;top:446.10px;color:#c4c4c4" width="14.25" height="14.25" viewBox="0 0 24 24"><path fill="currentColor" d="M19 3h-4.18C14.4 1.84 13.3 1 12 1c-1.3 0-2.4.84-2.82 2H5c-1.1 0-2 .9-2 2v14c0 1.1.9 2 2 2h14c1.1 0 2-.9 2-2V5c0-1.1-.9-2-2-2zm-6 15h-2v-2h2v2zm0-4h-2V8h2v6zm-1-9c-.55 0-1-.45-1-1s.45-1 1-1 1 .45 1 1-.45 1-1 1z"/></svg>
<svg class="b" style="left:1094.46px;top:446.10px;color:#c4c4c4" width="14.25" height="14.25" viewBox="0 0 24 24"><path fill="currentColor" d="M12 2C6.5 2 2 6.5 2 12s4.5 10 10 10 10-4.5 10-10S17.5 2 12 2zm4.2 14.2L11 13V7h1.5v5.2l4.5 2.7-.8 1.3z"/></svg>
<svg class="b" style="left:1108.69px;top:446.10px;color:#c4c4c4" width="14.25" height="14.25" viewBox="0 0 24 24"><path fill="currentColor" d="M19 3h-4.18C14.4 1.84 13.3 1 12 1c-1.3 0-2.4.84-2.82 2H5c-1.1 0-2 .9-2 2v14c0 1.1.9 2 2 2h14c1.1 0 2-.9 2-2V5c0-1.1-.9-2-2-2zm-7 0c.55 0 1 .45 1 1s-.45 1-1 1-1-.45-1-1 .45-1 1-1zm0 15l-5-5h3V9h4v4h3l-5 5z"/></svg>
<svg class="b" style="left:1122.92px;top:446.10px;color:#c4c4c4" width="14.25" height="14.25" viewBox="0 0 24 24"><path fill="currentColor" d="M19 3h-4.18C14.4 1.84 13.3 1 12 1c-1.3 0-2.4.84-2.82 2H5c-1.1 0-2 .9-2 2v14c0 1.1.9 2 2 2h14c1.1 0 2-.9 2-2V5c0-1.1-.9-2-2-2zm-7 0c.55 0 1 .45 1 1s-.45 1-1 1-1-.45-1-1 .45-1 1-1zm4 12h-4v3l-5-5 5-5v3h4v4z"/></svg>
<svg class="b" style="left:1137.15px;top:446.10px;color:#c4c4c4" width="14.25" height="14.25" viewBox="0 0 24 24"><path fill="currentColor" d="M19 3h-4.18C14.4 1.84 13.3 1 12 1c-1.3 0-2.4.84-2.82 2H5c-1.1 0-2 .9-2 2v14c0 1.1.9 2 2 2h14c1.1 0 2-.9 2-2V5c0-1.1-.9-2-2-2zm-7 0c.55 0 1 .45 1 1s-.45 1-1 1-1-.45-1-1 .45-1 1-1zm0 4c1.66 0 3 1.34 3 3s-1.34 3-3 3-3-1.34-3-3 1.34-3 3-3zm6 12H6v-1.4c0-2 4-3.1 6-3.1s6 1.1 6 3.1V19z"/></svg>
<svg class="b" style="left:1151.38px;top:446.10px;color:#c4c4c4" width="14.25" height="14.25" viewBox="0 0 24 24"><path fill="currentColor" d="M19 3h-4.18C14.4 1.84 13.3 1 12 1c-1.3 0-2.4.84-2.82 2H5c-1.1 0-2 .9-2 2v14c0 1.1.9 2 2 2h14c1.1 0 2-.9 2-2V5c0-1.1-.9-2-2-2zm-7 0c.55 0 1 .45 1 1s-.45 1-1 1-1-.45-1-1 .45-1 1-1zm2 14H7v-2h7v2zm3-4H7v-2h10v2zm0-4H7V7h10v2z"/></svg>
<svg class="b" style="left:1165.61px;top:446.10px;color:#c4c4c4" width="14.25" height="14.25" viewBox="0 0 24 24"><path fill="currentColor" d="M12 6.5c1.38 0 2.5 1.12 2.5 2.5 0 .74-.33 1.39-.83 1.85l3.63 3.63c.98-1.86 1.7-3.8 1.7-5.48 0-3.87-3.13-7-7-7-1.98 0-3.76.83-5.04 2.15l3.19 3.19c.46-.52 1.11-.84 1.85-.84zm4.37 9.6l-4.63-4.63-.11-.11L3.27 3 2 4.27l3.18 3.18C5.07 7.95 5 8.47 5 9c0 5.250 7 13 7 13s1.670-1.850 3.380-4.350L18.730 21 20 19.730l-3.630-3.630z"/></svg>
<svg class="b" style="left:1179.84px;top:446.10px;color:#c4c4c4" width="14.25" height="14.25" viewBox="0 0 24 24"><path fill="currentColor" fill-rule="evenodd" d="M2 2h20v20H2zM4.5 4.8h4v2.400h-4zM10 4.8h4v2.400h-4zM15.5 4.8h4v2.400h-4zM4.5 10.8h4v2.400h-4zM10 10.8h4v2.400h-4zM15.5 10.8h4v2.400h-4zM4.5 16.8h4v2.400h-4zM10 16.8h4v2.400h-4zM15.5 16.8h4v2.400h-4z"/><path d="M2.300 0.700L23.300 21.700" stroke="#fff" stroke-width="1.300" fill="none"/><path d="M0.800 1.700L22.300 23.200" stroke="currentColor" stroke-width="1.800" fill="none"/></svg>
<svg class="b" style="left:1194.07px;top:446.10px;color:#c4c4c4" width="14.25" height="14.25" viewBox="0 0 24 24"><path fill="currentColor" d="M12 2C6.48 2 2 6.48 2 12s4.480 10 10 10 10-4.480 10-10S17.520 2 12 2zm-1 17.930c-3.950-.490-7-3.850-7-7.930 0-.620.080-1.210.210-1.790L9 15v1c0 1.100.9 2 2 2v1.930zm6.900-2.540c-.260-.810-1-1.390-1.900-1.390h-1v-3c0-.550-.450-1-1-1H8v-2h2c.550 0 1-.450 1-1V7h2c1.100 0 2-.9 2-2v-.410c2.930 1.190 5 4.060 5 7.410 0 2.080-.8 3.970-2.100 5.390z"/></svg>
<svg class="b" style="left:1208.30px;top:446.10px;color:#c4c4c4" width="14.25" height="14.25" viewBox="0 0 24 24"><path fill="currentColor" d="M12 11.550C9.640 9.350 6.480 8 3 8v11c3.480 0 6.640 1.350 9 3.550 2.360-2.190 5.520-3.550 9-3.550V8c-3.480 0-6.640 1.350-9 3.550zM12 8c1.660 0 3-1.340 3-3s-1.340-3-3-3-3 1.340-3 3 1.340 3 3 3z"/></svg>
<svg class="b" style="left:1222.53px;top:446.10px;color:#c4c4c4" width="14.25" height="14.25" viewBox="0 0 24 24"><path fill="currentColor" d="M17 3H7c-1.100 0-1.990.9-1.990 2L5 21l7-3 7 3V5c0-1.100-.9-2-2-2z"/></svg>
<svg class="b" style="left:1236.76px;top:446.10px;color:#c4c4c4" width="14.25" height="14.25" viewBox="0 0 24 24"><path fill="currentColor" d="M17 3H7c-1.100 0-1.990.9-1.990 2L5 21l7-3 7 3V5c0-1.100-.9-2-2-2zm0 15l-5-2.180L7 18V5h10v13z"/></svg>
<svg class="b" style="left:1250.99px;top:446.10px;color:#c4c4c4" width="14.25" height="14.25" viewBox="0 0 24 24"><path fill="currentColor" d="M12 1L3 5v6c0 5.550 3.840 10.740 9 12 5.160-1.260 9-6.450 9-12V5l-9-4zm-2 16l-4-4 1.410-1.410L10 14.170l6.590-6.590L18 9l-8 8z"/></svg>
<svg class="b" style="left:1265.22px;top:446.10px;color:#c4c4c4" width="14.25" height="14.25" viewBox="0 0 24 24"><path fill="currentColor" d="M12 1L3 5v6c0 5.550 3.840 10.740 9 12 5.160-1.260 9-6.450 9-12V5l-9-4zm0 10.990h7c-.530 4.120-3.280 7.790-7 8.940V12H5V6.300l7-3.110v8.800z"/></svg>
<svg class="b" style="left:1279.45px;top:446.10px;color:#c4c4c4" width="14.25" height="14.25" viewBox="0 0 24 24"><path fill="currentColor" d="M3 3.500h8V11H3zM3 13.500h8V21H3zM13 13.500h8V21h-8zM12.500 5H17V1.800l6 5.450-6 5.450V9.500h-4.500zM16 11h2v3h-2z"/></svg>
<svg class="b" style="left:1293.68px;top:446.10px;color:#c4c4c4" width="14.25" height="14.25" viewBox="0 0 24 24"><path fill="currentColor" d="M4 16c0 .880.390 1.670 1 2.220V20c0 .550.450 1 1 1h1c.550 0 1-.450 1-1v-1h8v1c0 .550.450 1 1 1h1c.550 0 1-.450 1-1v-1.780c.610-.550 1-1.340 1-2.220V6c0-3.500-3.580-4-8-4s-8 .5-8 4v10zm3.500 1c-.830 0-1.500-.670-1.500-1.500S6.670 14 7.500 14s1.500.670 1.500 1.500S8.330 17 7.500 17zm9 0c-.830 0-1.500-.670-1.500-1.500s.670-1.500 1.500-1.500 1.500.670 1.500 1.500-.670 1.500-1.500 1.500zm1.500-6H6V6h12v5z"/></svg>
<svg class="b" style="left:1307.91px;top:446.10px;color:#c4c4c4" width="14.25" height="14.25" viewBox="0 0 24 24"><path fill="currentColor" d="M20.500 11H19V7c0-1.100-.9-2-2-2h-4V3.500C13 2.120 11.880 1 10.500 1S8 2.120 8 3.500V5H4c-1.100 0-1.990.9-1.990 2v3.800H3.500c1.490 0 2.700 1.210 2.700 2.700s-1.210 2.700-2.700 2.700H2V20c0 1.100.9 2 2 2h3.800v-1.500c0-1.490 1.210-2.700 2.700-2.700 1.490 0 2.700 1.210 2.700 2.700V22H17c1.100 0 2-.9 2-2v-4h1.500c1.380 0 2.500-1.120 2.500-2.500S21.880 11 20.500 11z"/></svg>
<svg class="b" style="left:1322.14px;top:446.10px;color:#c4c4c4" width="14.25" height="14.25" viewBox="0 0 24 24"><path fill="currentColor" d="M12 2C6.480 2 2 6.480 2 12s4.480 10 10 10 10-4.480 10-10S17.520 2 12 2zm1.410 16.090V20h-2.670v-1.930c-1.710-.360-3.160-1.460-3.270-3.400h1.960c.100 1.050.820 1.870 2.650 1.870 1.960 0 2.400-.980 2.400-1.590 0-.830-.440-1.610-2.670-2.140-2.480-.6-4.180-1.620-4.180-3.670 0-1.720 1.390-2.840 3.110-3.210V4h2.670v1.950c1.860.450 2.790 1.860 2.850 3.390H14.300c-.050-1.110-.640-1.870-2.220-1.870-1.500 0-2.400.680-2.400 1.640 0 .840.650 1.390 2.670 1.910s4.180 1.390 4.180 3.910c-.010 1.830-1.380 2.830-3.120 3.160z"/></svg>
<svg class="b" style="left:1336.37px;top:446.10px;color:#c4c4c4" width="14.25" height="14.25" viewBox="0 0 24 24"><path fill="currentColor" d="M12 2c1.100 0 2 .9 2 2s-.9 2-2 2-2-.9-2-2 .9-2 2-2zM19 13v-2c-1.540.02-3.090-.75-4.070-1.830l-1.290-1.430c-.17-.19-.38-.34-.61-.45-.01 0-.01-.01-.02-.01H13c-.35-.2-.75-.3-1.190-.26C10.760 7.110 10 8.040 10 9.090V15c0 1.100.9 2 2 2h5v5h2v-5.500c0-1.100-.9-2-2-2h-3v-3.450c1.290 1.070 3.250 1.940 5 1.950zm-6.170 5c-.41 1.160-1.520 2-2.830 2-1.660 0-3-1.340-3-3 0-1.310.84-2.410 2-2.830V12.100c-2.280.46-4 2.480-4 4.900 0 2.760 2.240 5 5 5 2.420 0 4.440-1.720 4.900-4h-2.070z"/></svg>
<svg class="b" style="left:1350.60px;top:446.10px;color:#42a5f5" width="14.25" height="14.25" viewBox="0 0 24 24"><path fill="currentColor" d="M12 2C8.140 2 5 5.140 5 9c0 5.250 7 13 7 13s7-7.750 7-13c0-3.860-3.140-7-7-7zm0 2c1.100 0 2 .9 2 2 0 1.110-.9 2-2 2s-2-.89-2-2c0-1.100.9-2 2-2zm0 10c-1.670 0-3.140-.85-4-2.150.02-1.320 2.670-2.050 4-2.050s3.980.73 4 2.050c-.86 1.300-2.330 2.150-4 2.150z"/></svg>
<svg class="b" style="left:1364.83px;top:446.10px;color:#c4c4c4" width="14.25" height="14.25" viewBox="0 0 24 24"><path fill="currentColor" d="M19 3H5c-1.100 0-1.990.9-1.990 2L3 19c0 1.100.9 2 2 2h14c1.100 0 2-.9 2-2V5c0-1.100-.9-2-2-2zm-1 11h-4v4h-4v-4H6v-4h4V6h4v4h4v4z"/></svg>
<svg class="b" style="left:1379.06px;top:446.10px;color:#c4c4c4" width="14.25" height="14.25" viewBox="0 0 24 24"><path fill="currentColor" d="M12 2C6.480 2 2 6.480 2 12s4.480 10 10 10 10-4.480 10-10S17.520 2 12 2zm0 18c-4.420 0-8-3.580-8-8s3.580-8 8-8 8 3.580 8 8-3.580 8-8 8z"/></svg>
<svg class="b" style="left:1393.29px;top:446.10px;color:#c4c4c4" width="14.25" height="14.25" viewBox="0 0 24 24"><path fill="currentColor" d="M18 2H6c-1.100 0-2 .9-2 2v16c0 1.100.9 2 2 2h12c1.100 0 2-.9 2-2V4c0-1.100-.9-2-2-2zM6 4h5v8l-2.500-1.500L6 12V4z"/></svg>
<svg class="b" style="left:1407.52px;top:446.10px;color:#c4c4c4" width="14.25" height="14.25" viewBox="0 0 24 24"><path fill="currentColor" d="M19 3h-4.18C14.4 1.84 13.3 1 12 1c-1.3 0-2.4.84-2.82 2H5c-1.1 0-2 .9-2 2v14c0 1.1.9 2 2 2h14c1.1 0 2-.9 2-2V5c0-1.1-.9-2-2-2zm-7 0c.55 0 1 .45 1 1s-.45 1-1 1-1-.45-1-1 .45-1 1-1zm-2 14l-4-4 1.410-1.410L10 14.170l6.590-6.590L18 9l-8 8z"/></svg>
<svg class="b" style="left:1421.75px;top:446.10px;color:#c4c4c4" width="14.25" height="14.25" viewBox="0 0 24 24"><path fill="currentColor" d="M21 5v14h2V5h-2zm-4 14h2V5h-2v14zM14 5H2c-.55 0-1 .45-1 1v12c0 .55.45 1 1 1h12c.55 0 1-.45 1-1V6c0-.55-.45-1-1-1zM8 7.750c1.240 0 2.250 1.010 2.250 2.250S9.240 12.250 8 12.250 5.750 11.240 5.750 10 6.760 7.750 8 7.750zM12.500 17h-9v-.75c0-1.500 3-2.250 4.500-2.250s4.500.75 4.500 2.250V17z"/></svg>
<svg class="b" style="left:1435.98px;top:446.10px;color:#42a5f5" width="14.25" height="14.25" viewBox="0 0 24 24"><path fill="currentColor" d="M14.400 6L14 4H5v17h2v-7h5.600l.4 2h7V6z"/></svg>
<div class="b" style="left:193.00px;top:472.00px;width:1284.00px;height:1.00px;background:#ececec;"></div>
<div class="b" style="left:193.00px;top:332.00px;width:2.00px;height:35.00px;background:#2a7fd8;"></div>
<div class="b" style="left:196.80px;top:331.20px;width:1267.90px;height:37.20px;border:4.5px solid #ea111b;box-sizing:border-box;"></div>
<span class="t" style="left:1255.50px;top:486px;line-height:12px;font-size:10.6px;color:#555;">10</span>
<div class="b" style="left:1254.50px;top:502.00px;width:34.00px;height:1.00px;background:#9a9a9a;"></div>
<svg class="b" style="left:1274.30px;top:484.00px;" width="16" height="16" viewBox="0 0 24 24"><path fill="#666" d="M7 10l5 5 5-5z"/></svg>
<span class="t" style="left:1298.00px;top:486px;line-height:12px;font-size:10.6px;color:#555;letter-spacing:0.081px;">1 - 10 z 14</span>
<svg class="b" style="left:1363.50px;top:485.60px;" width="17" height="17" viewBox="0 0 24 24"><path fill="#c2c2c2" stroke="#c2c2c2" stroke-width="1" stroke-linejoin="round" d="M18.410 16.590L13.820 12l4.590-4.590L17 6l-6 6 6 6zM6 6h2v12H6z"/></svg>
<svg class="b" style="left:1392.00px;top:485.60px;" width="17" height="17" viewBox="0 0 24 24"><path fill="#c2c2c2" stroke="#c2c2c2" stroke-width="1" stroke-linejoin="round" d="M15.410 7.410L14 6l-6 6 6 6 1.410-1.410L10.830 12z"/></svg>
<svg class="b" style="left:1420.30px;top:485.60px;" width="17" height="17" viewBox="0 0 24 24"><path fill="#2b2b2b" stroke="#2b2b2b" stroke-width="1" stroke-linejoin="round" d="M10 6L8.590 7.410 13.170 12l-4.580 4.590L10 18l6-6z"/></svg>
<svg class="b" style="left:1449.00px;top:485.60px;" width="17" height="17" viewBox="0 0 24 24"><path fill="#2b2b2b" stroke="#2b2b2b" stroke-width="1" stroke-linejoin="round" d="M5.590 7.410L10.180 12l-4.590 4.590L7 18l6-6-6-6zM16 6h2v12h-2z"/></svg>
<svg class="b" style="left:1500.60px;top:56.10px;" width="17" height="17" viewBox="0 0 24 24"><path fill="#1976d2" stroke="#1976d2" stroke-width="0.8" stroke-linejoin="round" d="M15.500 14h-.79l-.28-.27C15.410 12.590 16 11.110 16 9.500 16 5.910 13.090 3 9.500 3S3 5.910 3 9.500 5.910 16 9.500 16c1.610 0 3.090-.59 4.230-1.570l.27.28v.79l5 4.990L20.490 19l-4.990-5zm-6 0C7.010 14 5 11.990 5 9.500S7.010 5 9.500 5 14 7.010 14 9.500 11.990 14 9.500 14z"/></svg>
<span class="t" style="left:1523.90px;top:59px;line-height:12px;font-size:10.8px;color:#275d9f;letter-spacing:0.184px;-webkit-text-stroke:0.4px #275d9f;">Wyszukaj</span>
<span class="t" style="left:1500.90px;top:96px;line-height:12px;font-size:11.4px;color:#8c8c8c;letter-spacing:0.021px;">Imię</span>
<div class="b" style="left:1500.90px;top:113.00px;width:174.30px;height:1.00px;background:#969696;"></div>
<span class="t" style="left:1500.90px;top:142px;line-height:12px;font-size:11.4px;color:#8c8c8c;letter-spacing:0.103px;">Nazwisko</span>
<div class="b" style="left:1500.90px;top:159.00px;width:174.30px;height:1.00px;background:#969696;"></div>
<span class="t" style="left:1500.90px;top:189px;line-height:12px;font-size:11.4px;color:#8c8c8c;letter-spacing:-0.179px;">Pesel</span>
<div class="b" style="left:1500.90px;top:206.00px;width:174.30px;height:1.00px;background:#969696;"></div>
<span class="t" style="left:1500.90px;top:234px;line-height:12px;font-size:11.4px;color:#8c8c8c;letter-spacing:-0.047px;">Numer orzeczenia</span>
<div class="b" style="left:1500.90px;top:251.00px;width:174.30px;height:1.00px;background:#969696;"></div>
<span class="t" style="left:1500.90px;top:279px;line-height:12px;font-size:11.4px;color:#8c8c8c;letter-spacing:0.042px;">Identyfikator</span>
<div class="b" style="left:1500.90px;top:296.00px;width:174.30px;height:1.00px;background:#969696;"></div>
<span class="t" style="left:1500.90px;top:318px;line-height:12px;font-size:11.2px;font-weight:bold;color:#222;letter-spacing:-0.254px;">Nauka</span>
<span class="t" style="left:1500.90px;top:356px;line-height:12px;font-size:11.4px;color:#8c8c8c;letter-spacing:-0.130px;">Data rozpoczęcia nauki od dn...</span>
<div class="b" style="left:1500.90px;top:373.00px;width:174.30px;height:1.00px;background:#969696;"></div>
<svg class="b" style="left:1661.80px;top:356.80px;" width="11" height="11" viewBox="0 0 24 24"><path fill="#444" d="M19 3h-1V1h-2v2H8V1H6v2H5c-1.110 0-1.990.9-1.990 2L3 19c0 1.100.890 2 2 2h14c1.100 0 2-.9 2-2V5c0-1.100-.9-2-2-2zm0 16H5V8h14v11zM7 10h5v5H7z"/></svg>
<span class="t" style="left:1500.90px;top:403px;line-height:12px;font-size:11.4px;color:#8c8c8c;letter-spacing:-0.124px;">Data zakończenia nauki do d...</span>
<div class="b" style="left:1500.90px;top:420.00px;width:174.30px;height:1.00px;background:#969696;"></div>
<svg class="b" style="left:1661.80px;top:403.80px;" width="11" height="11" viewBox="0 0 24 24"><path fill="#444" d="M19 3h-1V1h-2v2H8V1H6v2H5c-1.110 0-1.990.9-1.990 2L3 19c0 1.100.890 2 2 2h14c1.100 0 2-.9 2-2V5c0-1.100-.9-2-2-2zm0 16H5V8h14v11zM7 10h5v5H7z"/></svg>
<span class="t" style="left:1500.90px;top:440px;line-height:12px;font-size:11.2px;font-weight:bold;color:#222;letter-spacing:-0.224px;">Oddział</span>
<span class="t" style="left:1500.90px;top:478px;line-height:12px;font-size:11.4px;color:#8c8c8c;letter-spacing:-0.057px;">Rok szkolny oddziału</span>
<div class="b" style="left:1500.90px;top:495.00px;width:174.30px;height:1.00px;background:#969696;"></div>
<svg class="b" style="left:1661.80px;top:476.50px;" width="16" height="16" viewBox="0 0 24 24"><path fill="#666" d="M7 10l5 5 5-5z"/></svg>
<span class="t" style="left:1500.90px;top:510px;line-height:9px;font-size:8.2px;color:#8e8e8e;letter-spacing:0.214px;">Typ oddziału</span>
<span class="t" style="left:1500.90px;top:524px;line-height:12px;font-size:11.4px;color:#333;letter-spacing:0.051px;">Podstawowe</span>
<div class="b" style="left:1500.90px;top:541.00px;width:177.50px;height:1.00px;background:#969696;"></div>
<svg class="b" style="left:1661.80px;top:522.50px;" width="16" height="16" viewBox="0 0 24 24"><path fill="#666" d="M7 10l5 5 5-5z"/></svg>
<span class="t" style="left:1500.90px;top:570px;line-height:12px;font-size:11.4px;color:#8c8c8c;letter-spacing:-0.021px;">Oddział podstawowy</span>
<div class="b" style="left:1500.90px;top:587.00px;width:174.30px;height:0.00px;border-top:1px dotted #bdbdbd;"></div>
<svg class="b" style="left:1661.80px;top:568.50px;" width="16" height="16" viewBox="0 0 24 24"><path fill="#666" d="M7 10l5 5 5-5z"/></svg>
</body></html>
